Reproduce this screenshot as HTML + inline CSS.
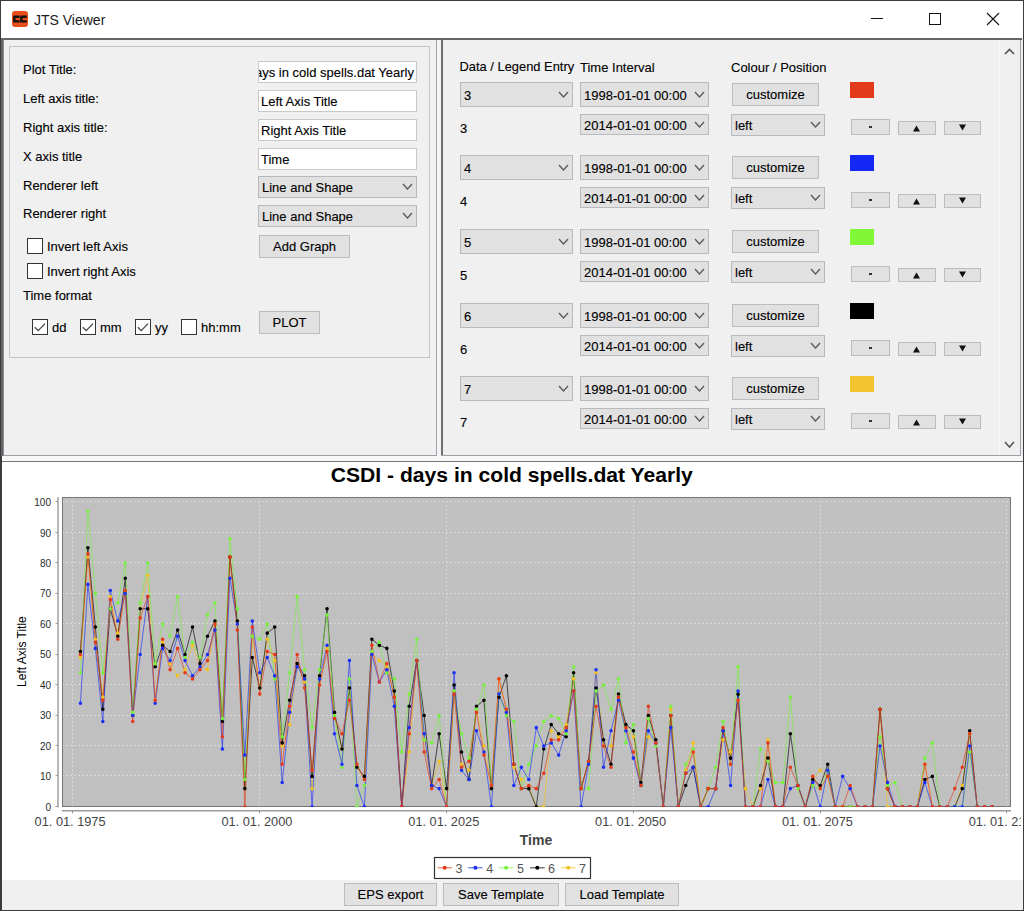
<!DOCTYPE html><html><head><meta charset="utf-8"><style>
html,body{margin:0;padding:0;}
body{width:1024px;height:911px;position:relative;overflow:hidden;background:#f0f0f0;font-family:"Liberation Sans", sans-serif;}
.t{position:absolute;white-space:nowrap;-webkit-text-stroke:0.12px currentColor;}
.b{position:absolute;box-sizing:border-box;}
</style></head><body>
<div class="b" style="left:0px;top:0px;width:1024px;height:38px;background:#fff;"></div>
<div class="b" style="left:0px;top:38px;width:1022px;height:2px;background:#666;"></div>
<div class="b" style="left:12px;top:11px;width:16px;height:16px;border-radius:3px;background:#e84e1b"></div>
<svg class="b" style="left:12px;top:11px" width="16" height="16"><path d="M7.6,5.8 H2.3 V10.4 H7.6 M14.8,5.8 H9.3 V10.4 H14.8" fill="none" stroke="#111" stroke-width="2.4" stroke-linejoin="round"/></svg>
<div class="t" style="left:34px;top:13px;font-size:14px;line-height:14px;color:#1a1a1a;font-weight:normal;-webkit-text-stroke:0;">JTS Viewer</div>
<div class="b" style="left:871px;top:18px;width:12px;height:1px;background:#111;"></div>
<div class="b" style="left:929px;top:13px;width:12px;height:12px;border:1px solid #111"></div>
<svg class="b" style="left:986px;top:12px" width="14" height="14"><path d="M1,1 L13,13 M13,1 L1,13" stroke="#111" stroke-width="1.1"/></svg>
<div class="b" style="left:3px;top:40px;width:434px;height:416px;background:#f0f0f0;"></div>
<div class="b" style="left:3px;top:40px;width:1px;height:416px;background:#8a8e96;"></div>
<div class="b" style="left:436px;top:40px;width:1px;height:416px;background:#a0a4ac;"></div>
<div class="b" style="left:3px;top:455px;width:434px;height:1px;background:#9ca0a8;"></div>
<div class="b" style="left:437px;top:40px;width:4px;height:416px;background:#f4f4f4;"></div>
<div class="b" style="left:9px;top:46px;width:421px;height:312px;box-shadow:inset 0 0 0 1px #c4c4c4;"></div>
<div class="t" style="left:23px;top:63px;font-size:13px;line-height:13px;color:#000;font-weight:normal;">Plot Title:</div>
<div class="t" style="left:23px;top:92px;font-size:13px;line-height:13px;color:#000;font-weight:normal;">Left axis title:</div>
<div class="t" style="left:23px;top:121px;font-size:13px;line-height:13px;color:#000;font-weight:normal;">Right axis title:</div>
<div class="t" style="left:23px;top:150px;font-size:13px;line-height:13px;color:#000;font-weight:normal;">X axis title</div>
<div class="t" style="left:23px;top:179px;font-size:13px;line-height:13px;color:#000;font-weight:normal;">Renderer left</div>
<div class="t" style="left:23px;top:207px;font-size:13px;line-height:13px;color:#000;font-weight:normal;">Renderer right</div>
<div class="b" style="left:258px;top:61px;width:159px;height:22px;background:#fff;box-shadow:inset 0 0 0 1px #c8c8c8;"></div>
<div class="b" style="left:259px;top:62px;width:157px;height:20px;overflow:hidden">
<div class="t" style="right:0;left:auto;top:4px;font-size:13px;line-height:13px;padding-right:2px">ays in cold spells.dat Yearly</div>
</div>
<div class="b" style="left:258px;top:90px;width:159px;height:22px;background:#fff;box-shadow:inset 0 0 0 1px #c8c8c8;"></div>
<div class="b" style="left:259px;top:91px;width:157px;height:20px;overflow:hidden">
<div class="t" style="right:auto;left:2px;top:4px;font-size:13px;line-height:13px;padding-right:2px">Left Axis Title</div>
</div>
<div class="b" style="left:258px;top:119px;width:159px;height:22px;background:#fff;box-shadow:inset 0 0 0 1px #c8c8c8;"></div>
<div class="b" style="left:259px;top:120px;width:157px;height:20px;overflow:hidden">
<div class="t" style="right:auto;left:2px;top:4px;font-size:13px;line-height:13px;padding-right:2px">Right Axis Title</div>
</div>
<div class="b" style="left:258px;top:148px;width:159px;height:22px;background:#fff;box-shadow:inset 0 0 0 1px #c8c8c8;"></div>
<div class="b" style="left:259px;top:149px;width:157px;height:20px;overflow:hidden">
<div class="t" style="right:auto;left:2px;top:4px;font-size:13px;line-height:13px;padding-right:2px">Time</div>
</div>
<div class="b" style="left:258px;top:176px;width:159px;height:22px;background:#e1e1e1;box-shadow:inset 0 0 0 1px #b8b9bc;"></div>
<div class="t" style="left:262px;top:181px;font-size:13px;line-height:13px;color:#000;font-weight:normal;">Line and Shape</div>
<svg class="b" style="left:402.0px;top:183.4px" width="11" height="7"><polyline points="1,1 5.5,6 10,1" fill="none" stroke="#5a5a5a" stroke-width="1.35"/></svg>
<div class="b" style="left:258px;top:205px;width:159px;height:22px;background:#e1e1e1;box-shadow:inset 0 0 0 1px #b8b9bc;"></div>
<div class="t" style="left:262px;top:210px;font-size:13px;line-height:13px;color:#000;font-weight:normal;">Line and Shape</div>
<svg class="b" style="left:402.0px;top:212.4px" width="11" height="7"><polyline points="1,1 5.5,6 10,1" fill="none" stroke="#5a5a5a" stroke-width="1.35"/></svg>
<div class="b" style="left:259px;top:235px;width:91px;height:23px;background:#e1e1e1;box-shadow:inset 0 0 0 1px #bcbcbc;"></div>
<div class="t" style="left:259px;width:91px;text-align:center;top:240px;font-size:13px;line-height:13px">Add Graph</div>
<div class="b" style="left:27px;top:238px;width:16px;height:16px;background:#fff;box-shadow:inset 0 0 0 1px #333;"></div>
<div class="t" style="left:47px;top:240px;font-size:13px;line-height:13px;color:#000;font-weight:normal;">Invert left Axis</div>
<div class="b" style="left:27px;top:263px;width:16px;height:16px;background:#fff;box-shadow:inset 0 0 0 1px #333;"></div>
<div class="t" style="left:47px;top:265px;font-size:13px;line-height:13px;color:#000;font-weight:normal;">Invert right Axis</div>
<div class="t" style="left:23px;top:289px;font-size:13px;line-height:13px;color:#000;font-weight:normal;">Time format</div>
<div class="b" style="left:32px;top:319px;width:16px;height:16px;background:#fff;box-shadow:inset 0 0 0 1px #333;"></div>
<svg class="b" style="left:32px;top:319px" width="16" height="16"><polyline points="2.8,8.2 6.2,11.6 13,4.6" fill="none" stroke="#444" stroke-width="1.3"/></svg>
<div class="t" style="left:52px;top:321px;font-size:13px;line-height:13px;color:#000;font-weight:normal;">dd</div>
<div class="b" style="left:80px;top:319px;width:16px;height:16px;background:#fff;box-shadow:inset 0 0 0 1px #333;"></div>
<svg class="b" style="left:80px;top:319px" width="16" height="16"><polyline points="2.8,8.2 6.2,11.6 13,4.6" fill="none" stroke="#444" stroke-width="1.3"/></svg>
<div class="t" style="left:100px;top:321px;font-size:13px;line-height:13px;color:#000;font-weight:normal;">mm</div>
<div class="b" style="left:135px;top:319px;width:16px;height:16px;background:#fff;box-shadow:inset 0 0 0 1px #333;"></div>
<svg class="b" style="left:135px;top:319px" width="16" height="16"><polyline points="2.8,8.2 6.2,11.6 13,4.6" fill="none" stroke="#444" stroke-width="1.3"/></svg>
<div class="t" style="left:155px;top:321px;font-size:13px;line-height:13px;color:#000;font-weight:normal;">yy</div>
<div class="b" style="left:181px;top:319px;width:16px;height:16px;background:#fff;box-shadow:inset 0 0 0 1px #333;"></div>
<div class="t" style="left:201px;top:321px;font-size:13px;line-height:13px;color:#000;font-weight:normal;">hh:mm</div>
<div class="b" style="left:259px;top:311px;width:61px;height:23px;background:#e1e1e1;box-shadow:inset 0 0 0 1px #bcbcbc;"></div>
<div class="t" style="left:259px;width:61px;text-align:center;top:316px;font-size:13px;line-height:13px">PLOT</div>
<div class="b" style="left:441px;top:40px;width:2px;height:416px;background:#707070;"></div>
<div class="b" style="left:1020px;top:40px;width:1px;height:416px;background:#9ca0a8;"></div>
<div class="b" style="left:441px;top:455px;width:580px;height:1px;background:#9ca0a8;"></div>
<div class="b" style="left:999px;top:41px;width:1px;height:414px;background:#fafafa;"></div>
<svg class="b" style="left:1004.0px;top:441.0px" width="11" height="7"><polyline points="1,1 5.5,6 10,1" fill="none" stroke="#555" stroke-width="1.6"/></svg>
<svg class="b" style="left:1004px;top:47px" width="12" height="9"><polyline points="1,7 5.5,2.5 10,7" fill="none" stroke="#555" stroke-width="1.7"/></svg>
<div class="t" style="left:459.5px;top:61px;font-size:12.9px;line-height:12.9px;color:#000;font-weight:normal;">Data / Legend Entry</div>
<div class="t" style="left:580px;top:61px;font-size:13px;line-height:13px;color:#000;font-weight:normal;">Time Interval</div>
<div class="t" style="left:731px;top:61px;font-size:13px;line-height:13px;color:#000;font-weight:normal;">Colour / Position</div>
<div class="b" style="left:460px;top:82px;width:113px;height:25px;background:#e1e1e1;box-shadow:inset 0 0 0 1px #b8b9bc;"></div>
<div class="t" style="left:464px;top:89px;font-size:13px;line-height:13px;color:#000;font-weight:normal;">3</div>
<svg class="b" style="left:558.0px;top:90.9px" width="11" height="7"><polyline points="1,1 5.5,6 10,1" fill="none" stroke="#5a5a5a" stroke-width="1.35"/></svg>
<div class="t" style="left:460px;top:122px;font-size:13px;line-height:13px;color:#000;font-weight:normal;">3</div>
<div class="b" style="left:580px;top:82px;width:129px;height:25px;background:#e1e1e1;box-shadow:inset 0 0 0 1px #b8b9bc;"></div>
<div class="t" style="left:584px;top:89px;font-size:13px;line-height:13px;color:#000;font-weight:normal;">1998-01-01 00:00</div>
<svg class="b" style="left:694.0px;top:90.9px" width="11" height="7"><polyline points="1,1 5.5,6 10,1" fill="none" stroke="#5a5a5a" stroke-width="1.35"/></svg>
<div class="b" style="left:580px;top:114px;width:129px;height:21px;background:#e1e1e1;box-shadow:inset 0 0 0 1px #b8b9bc;"></div>
<div class="t" style="left:584px;top:119px;font-size:13px;line-height:13px;color:#000;font-weight:normal;">2014-01-01 00:00</div>
<svg class="b" style="left:694.0px;top:120.9px" width="11" height="7"><polyline points="1,1 5.5,6 10,1" fill="none" stroke="#5a5a5a" stroke-width="1.35"/></svg>
<div class="b" style="left:732px;top:83px;width:87px;height:23px;background:#e1e1e1;box-shadow:inset 0 0 0 1px #bcbcbc;"></div>
<div class="t" style="left:732px;width:87px;text-align:center;top:88px;font-size:13px;line-height:13px">customize</div>
<div class="b" style="left:731px;top:114px;width:94px;height:22px;background:#e1e1e1;box-shadow:inset 0 0 0 1px #b8b9bc;"></div>
<div class="t" style="left:735px;top:119px;font-size:13px;line-height:13px;color:#000;font-weight:normal;">left</div>
<svg class="b" style="left:810.0px;top:121.4px" width="11" height="7"><polyline points="1,1 5.5,6 10,1" fill="none" stroke="#5a5a5a" stroke-width="1.35"/></svg>
<div class="b" style="left:850px;top:82px;width:24px;height:16px;background:#e23a1a;"></div>
<div class="b" style="left:851px;top:119px;width:39px;height:16px;background:#e1e1e1;box-shadow:inset 0 0 0 1px #bcbcbc;"></div>
<div class="t" style="left:851px;width:39px;text-align:center;top:122px;font-size:11px;line-height:11px"></div>
<div class="b" style="left:869px;top:126px;width:3px;height:2px;background:#333;"></div>
<div class="b" style="left:898px;top:121px;width:38px;height:14px;background:#e1e1e1;box-shadow:inset 0 0 0 1px #bcbcbc;"></div>
<div class="t" style="left:898px;width:38px;text-align:center;top:125px;font-size:9px;line-height:9px"></div>
<svg class="b" style="left:912px;top:124px" width="9" height="8"><polygon points="1,7.5 4.5,1.5 8,7.5" fill="#111"/></svg>
<div class="b" style="left:944px;top:121px;width:37px;height:14px;background:#e1e1e1;box-shadow:inset 0 0 0 1px #bcbcbc;"></div>
<div class="t" style="left:944px;width:37px;text-align:center;top:125px;font-size:9px;line-height:9px"></div>
<svg class="b" style="left:958px;top:124px" width="9" height="8"><polygon points="1,0.5 4.5,6.5 8,0.5" fill="#111"/></svg>
<div class="b" style="left:460px;top:155px;width:113px;height:25px;background:#e1e1e1;box-shadow:inset 0 0 0 1px #b8b9bc;"></div>
<div class="t" style="left:464px;top:162px;font-size:13px;line-height:13px;color:#000;font-weight:normal;">4</div>
<svg class="b" style="left:558.0px;top:163.9px" width="11" height="7"><polyline points="1,1 5.5,6 10,1" fill="none" stroke="#5a5a5a" stroke-width="1.35"/></svg>
<div class="t" style="left:460px;top:195px;font-size:13px;line-height:13px;color:#000;font-weight:normal;">4</div>
<div class="b" style="left:580px;top:155px;width:129px;height:25px;background:#e1e1e1;box-shadow:inset 0 0 0 1px #b8b9bc;"></div>
<div class="t" style="left:584px;top:162px;font-size:13px;line-height:13px;color:#000;font-weight:normal;">1998-01-01 00:00</div>
<svg class="b" style="left:694.0px;top:163.9px" width="11" height="7"><polyline points="1,1 5.5,6 10,1" fill="none" stroke="#5a5a5a" stroke-width="1.35"/></svg>
<div class="b" style="left:580px;top:187px;width:129px;height:21px;background:#e1e1e1;box-shadow:inset 0 0 0 1px #b8b9bc;"></div>
<div class="t" style="left:584px;top:192px;font-size:13px;line-height:13px;color:#000;font-weight:normal;">2014-01-01 00:00</div>
<svg class="b" style="left:694.0px;top:193.9px" width="11" height="7"><polyline points="1,1 5.5,6 10,1" fill="none" stroke="#5a5a5a" stroke-width="1.35"/></svg>
<div class="b" style="left:732px;top:156px;width:87px;height:23px;background:#e1e1e1;box-shadow:inset 0 0 0 1px #bcbcbc;"></div>
<div class="t" style="left:732px;width:87px;text-align:center;top:161px;font-size:13px;line-height:13px">customize</div>
<div class="b" style="left:731px;top:187px;width:94px;height:22px;background:#e1e1e1;box-shadow:inset 0 0 0 1px #b8b9bc;"></div>
<div class="t" style="left:735px;top:192px;font-size:13px;line-height:13px;color:#000;font-weight:normal;">left</div>
<svg class="b" style="left:810.0px;top:194.4px" width="11" height="7"><polyline points="1,1 5.5,6 10,1" fill="none" stroke="#5a5a5a" stroke-width="1.35"/></svg>
<div class="b" style="left:850px;top:155px;width:24px;height:16px;background:#1428f5;"></div>
<div class="b" style="left:851px;top:192px;width:39px;height:16px;background:#e1e1e1;box-shadow:inset 0 0 0 1px #bcbcbc;"></div>
<div class="t" style="left:851px;width:39px;text-align:center;top:195px;font-size:11px;line-height:11px"></div>
<div class="b" style="left:869px;top:199px;width:3px;height:2px;background:#333;"></div>
<div class="b" style="left:898px;top:194px;width:38px;height:14px;background:#e1e1e1;box-shadow:inset 0 0 0 1px #bcbcbc;"></div>
<div class="t" style="left:898px;width:38px;text-align:center;top:198px;font-size:9px;line-height:9px"></div>
<svg class="b" style="left:912px;top:197px" width="9" height="8"><polygon points="1,7.5 4.5,1.5 8,7.5" fill="#111"/></svg>
<div class="b" style="left:944px;top:194px;width:37px;height:14px;background:#e1e1e1;box-shadow:inset 0 0 0 1px #bcbcbc;"></div>
<div class="t" style="left:944px;width:37px;text-align:center;top:198px;font-size:9px;line-height:9px"></div>
<svg class="b" style="left:958px;top:197px" width="9" height="8"><polygon points="1,0.5 4.5,6.5 8,0.5" fill="#111"/></svg>
<div class="b" style="left:460px;top:229px;width:113px;height:25px;background:#e1e1e1;box-shadow:inset 0 0 0 1px #b8b9bc;"></div>
<div class="t" style="left:464px;top:236px;font-size:13px;line-height:13px;color:#000;font-weight:normal;">5</div>
<svg class="b" style="left:558.0px;top:237.9px" width="11" height="7"><polyline points="1,1 5.5,6 10,1" fill="none" stroke="#5a5a5a" stroke-width="1.35"/></svg>
<div class="t" style="left:460px;top:269px;font-size:13px;line-height:13px;color:#000;font-weight:normal;">5</div>
<div class="b" style="left:580px;top:229px;width:129px;height:25px;background:#e1e1e1;box-shadow:inset 0 0 0 1px #b8b9bc;"></div>
<div class="t" style="left:584px;top:236px;font-size:13px;line-height:13px;color:#000;font-weight:normal;">1998-01-01 00:00</div>
<svg class="b" style="left:694.0px;top:237.9px" width="11" height="7"><polyline points="1,1 5.5,6 10,1" fill="none" stroke="#5a5a5a" stroke-width="1.35"/></svg>
<div class="b" style="left:580px;top:261px;width:129px;height:21px;background:#e1e1e1;box-shadow:inset 0 0 0 1px #b8b9bc;"></div>
<div class="t" style="left:584px;top:266px;font-size:13px;line-height:13px;color:#000;font-weight:normal;">2014-01-01 00:00</div>
<svg class="b" style="left:694.0px;top:267.9px" width="11" height="7"><polyline points="1,1 5.5,6 10,1" fill="none" stroke="#5a5a5a" stroke-width="1.35"/></svg>
<div class="b" style="left:732px;top:230px;width:87px;height:23px;background:#e1e1e1;box-shadow:inset 0 0 0 1px #bcbcbc;"></div>
<div class="t" style="left:732px;width:87px;text-align:center;top:235px;font-size:13px;line-height:13px">customize</div>
<div class="b" style="left:731px;top:261px;width:94px;height:22px;background:#e1e1e1;box-shadow:inset 0 0 0 1px #b8b9bc;"></div>
<div class="t" style="left:735px;top:266px;font-size:13px;line-height:13px;color:#000;font-weight:normal;">left</div>
<svg class="b" style="left:810.0px;top:268.4px" width="11" height="7"><polyline points="1,1 5.5,6 10,1" fill="none" stroke="#5a5a5a" stroke-width="1.35"/></svg>
<div class="b" style="left:850px;top:229px;width:24px;height:16px;background:#80f838;"></div>
<div class="b" style="left:851px;top:266px;width:39px;height:16px;background:#e1e1e1;box-shadow:inset 0 0 0 1px #bcbcbc;"></div>
<div class="t" style="left:851px;width:39px;text-align:center;top:269px;font-size:11px;line-height:11px"></div>
<div class="b" style="left:869px;top:273px;width:3px;height:2px;background:#333;"></div>
<div class="b" style="left:898px;top:268px;width:38px;height:14px;background:#e1e1e1;box-shadow:inset 0 0 0 1px #bcbcbc;"></div>
<div class="t" style="left:898px;width:38px;text-align:center;top:272px;font-size:9px;line-height:9px"></div>
<svg class="b" style="left:912px;top:271px" width="9" height="8"><polygon points="1,7.5 4.5,1.5 8,7.5" fill="#111"/></svg>
<div class="b" style="left:944px;top:268px;width:37px;height:14px;background:#e1e1e1;box-shadow:inset 0 0 0 1px #bcbcbc;"></div>
<div class="t" style="left:944px;width:37px;text-align:center;top:272px;font-size:9px;line-height:9px"></div>
<svg class="b" style="left:958px;top:271px" width="9" height="8"><polygon points="1,0.5 4.5,6.5 8,0.5" fill="#111"/></svg>
<div class="b" style="left:460px;top:303px;width:113px;height:25px;background:#e1e1e1;box-shadow:inset 0 0 0 1px #b8b9bc;"></div>
<div class="t" style="left:464px;top:310px;font-size:13px;line-height:13px;color:#000;font-weight:normal;">6</div>
<svg class="b" style="left:558.0px;top:311.9px" width="11" height="7"><polyline points="1,1 5.5,6 10,1" fill="none" stroke="#5a5a5a" stroke-width="1.35"/></svg>
<div class="t" style="left:460px;top:343px;font-size:13px;line-height:13px;color:#000;font-weight:normal;">6</div>
<div class="b" style="left:580px;top:303px;width:129px;height:25px;background:#e1e1e1;box-shadow:inset 0 0 0 1px #b8b9bc;"></div>
<div class="t" style="left:584px;top:310px;font-size:13px;line-height:13px;color:#000;font-weight:normal;">1998-01-01 00:00</div>
<svg class="b" style="left:694.0px;top:311.9px" width="11" height="7"><polyline points="1,1 5.5,6 10,1" fill="none" stroke="#5a5a5a" stroke-width="1.35"/></svg>
<div class="b" style="left:580px;top:335px;width:129px;height:21px;background:#e1e1e1;box-shadow:inset 0 0 0 1px #b8b9bc;"></div>
<div class="t" style="left:584px;top:340px;font-size:13px;line-height:13px;color:#000;font-weight:normal;">2014-01-01 00:00</div>
<svg class="b" style="left:694.0px;top:341.9px" width="11" height="7"><polyline points="1,1 5.5,6 10,1" fill="none" stroke="#5a5a5a" stroke-width="1.35"/></svg>
<div class="b" style="left:732px;top:304px;width:87px;height:23px;background:#e1e1e1;box-shadow:inset 0 0 0 1px #bcbcbc;"></div>
<div class="t" style="left:732px;width:87px;text-align:center;top:309px;font-size:13px;line-height:13px">customize</div>
<div class="b" style="left:731px;top:335px;width:94px;height:22px;background:#e1e1e1;box-shadow:inset 0 0 0 1px #b8b9bc;"></div>
<div class="t" style="left:735px;top:340px;font-size:13px;line-height:13px;color:#000;font-weight:normal;">left</div>
<svg class="b" style="left:810.0px;top:342.4px" width="11" height="7"><polyline points="1,1 5.5,6 10,1" fill="none" stroke="#5a5a5a" stroke-width="1.35"/></svg>
<div class="b" style="left:850px;top:303px;width:24px;height:16px;background:#000000;"></div>
<div class="b" style="left:851px;top:340px;width:39px;height:16px;background:#e1e1e1;box-shadow:inset 0 0 0 1px #bcbcbc;"></div>
<div class="t" style="left:851px;width:39px;text-align:center;top:343px;font-size:11px;line-height:11px"></div>
<div class="b" style="left:869px;top:347px;width:3px;height:2px;background:#333;"></div>
<div class="b" style="left:898px;top:342px;width:38px;height:14px;background:#e1e1e1;box-shadow:inset 0 0 0 1px #bcbcbc;"></div>
<div class="t" style="left:898px;width:38px;text-align:center;top:346px;font-size:9px;line-height:9px"></div>
<svg class="b" style="left:912px;top:345px" width="9" height="8"><polygon points="1,7.5 4.5,1.5 8,7.5" fill="#111"/></svg>
<div class="b" style="left:944px;top:342px;width:37px;height:14px;background:#e1e1e1;box-shadow:inset 0 0 0 1px #bcbcbc;"></div>
<div class="t" style="left:944px;width:37px;text-align:center;top:346px;font-size:9px;line-height:9px"></div>
<svg class="b" style="left:958px;top:345px" width="9" height="8"><polygon points="1,0.5 4.5,6.5 8,0.5" fill="#111"/></svg>
<div class="b" style="left:460px;top:376px;width:113px;height:25px;background:#e1e1e1;box-shadow:inset 0 0 0 1px #b8b9bc;"></div>
<div class="t" style="left:464px;top:383px;font-size:13px;line-height:13px;color:#000;font-weight:normal;">7</div>
<svg class="b" style="left:558.0px;top:384.9px" width="11" height="7"><polyline points="1,1 5.5,6 10,1" fill="none" stroke="#5a5a5a" stroke-width="1.35"/></svg>
<div class="t" style="left:460px;top:416px;font-size:13px;line-height:13px;color:#000;font-weight:normal;">7</div>
<div class="b" style="left:580px;top:376px;width:129px;height:25px;background:#e1e1e1;box-shadow:inset 0 0 0 1px #b8b9bc;"></div>
<div class="t" style="left:584px;top:383px;font-size:13px;line-height:13px;color:#000;font-weight:normal;">1998-01-01 00:00</div>
<svg class="b" style="left:694.0px;top:384.9px" width="11" height="7"><polyline points="1,1 5.5,6 10,1" fill="none" stroke="#5a5a5a" stroke-width="1.35"/></svg>
<div class="b" style="left:580px;top:408px;width:129px;height:21px;background:#e1e1e1;box-shadow:inset 0 0 0 1px #b8b9bc;"></div>
<div class="t" style="left:584px;top:413px;font-size:13px;line-height:13px;color:#000;font-weight:normal;">2014-01-01 00:00</div>
<svg class="b" style="left:694.0px;top:414.9px" width="11" height="7"><polyline points="1,1 5.5,6 10,1" fill="none" stroke="#5a5a5a" stroke-width="1.35"/></svg>
<div class="b" style="left:732px;top:377px;width:87px;height:23px;background:#e1e1e1;box-shadow:inset 0 0 0 1px #bcbcbc;"></div>
<div class="t" style="left:732px;width:87px;text-align:center;top:382px;font-size:13px;line-height:13px">customize</div>
<div class="b" style="left:731px;top:408px;width:94px;height:22px;background:#e1e1e1;box-shadow:inset 0 0 0 1px #b8b9bc;"></div>
<div class="t" style="left:735px;top:413px;font-size:13px;line-height:13px;color:#000;font-weight:normal;">left</div>
<svg class="b" style="left:810.0px;top:415.4px" width="11" height="7"><polyline points="1,1 5.5,6 10,1" fill="none" stroke="#5a5a5a" stroke-width="1.35"/></svg>
<div class="b" style="left:850px;top:376px;width:24px;height:16px;background:#f4c430;"></div>
<div class="b" style="left:851px;top:413px;width:39px;height:16px;background:#e1e1e1;box-shadow:inset 0 0 0 1px #bcbcbc;"></div>
<div class="t" style="left:851px;width:39px;text-align:center;top:416px;font-size:11px;line-height:11px"></div>
<div class="b" style="left:869px;top:420px;width:3px;height:2px;background:#333;"></div>
<div class="b" style="left:898px;top:415px;width:38px;height:14px;background:#e1e1e1;box-shadow:inset 0 0 0 1px #bcbcbc;"></div>
<div class="t" style="left:898px;width:38px;text-align:center;top:419px;font-size:9px;line-height:9px"></div>
<svg class="b" style="left:912px;top:418px" width="9" height="8"><polygon points="1,7.5 4.5,1.5 8,7.5" fill="#111"/></svg>
<div class="b" style="left:944px;top:415px;width:37px;height:14px;background:#e1e1e1;box-shadow:inset 0 0 0 1px #bcbcbc;"></div>
<div class="t" style="left:944px;width:37px;text-align:center;top:419px;font-size:9px;line-height:9px"></div>
<svg class="b" style="left:958px;top:418px" width="9" height="8"><polygon points="1,0.5 4.5,6.5 8,0.5" fill="#111"/></svg>
<div class="b" style="left:0px;top:456px;width:1024px;height:5px;background:#f8f8f8;"></div>
<div class="b" style="left:0px;top:461px;width:1024px;height:1px;background:#777;"></div>
<div class="b" style="left:2px;top:462px;width:1021px;height:418px;background:#fff;"></div>
<div class="b" style="left:2px;top:880px;width:1021px;height:30px;background:#f0f0f0;"></div>
<div class="b" style="left:344px;top:883px;width:93px;height:23px;background:#e1e1e1;box-shadow:inset 0 0 0 1px #bcbcbc;"></div>
<div class="t" style="left:344px;width:93px;text-align:center;top:888px;font-size:13px;line-height:13px">EPS export</div>
<div class="b" style="left:443px;top:883px;width:116px;height:23px;background:#e1e1e1;box-shadow:inset 0 0 0 1px #bcbcbc;"></div>
<div class="t" style="left:443px;width:116px;text-align:center;top:888px;font-size:13px;line-height:13px">Save Template</div>
<div class="b" style="left:565px;top:883px;width:114px;height:23px;background:#e1e1e1;box-shadow:inset 0 0 0 1px #bcbcbc;"></div>
<div class="t" style="left:565px;width:114px;text-align:center;top:888px;font-size:13px;line-height:13px">Load Template</div>
<svg class="b" style="left:2px;top:462px" width="1019" height="418" viewBox="2 462 1019 418" font-family="Liberation Sans, sans-serif">
<text x="511.8" y="482.3" text-anchor="middle" font-weight="bold" font-size="20" textLength="362" lengthAdjust="spacingAndGlyphs" fill="#000">CSDI - days in cold spells.dat Yearly</text>
<rect x="62" y="497" width="948" height="309" fill="#c0c0c0"/>
<path d="M62,775.5H1010M62,745.5H1010M62,715.5H1010M62,684.5H1010M62,654.5H1010M62,623.5H1010M62,593.5H1010M62,562.5H1010M62,532.5H1010M62,501.5H1010M72.5,497V806M259.5,497V806M446.5,497V806M633.5,497V806M820.5,497V806M1006.5,497V806" stroke="#d9d9d9" stroke-width="1" stroke-dasharray="2,2" fill="none"/>
<rect x="62.5" y="497.5" width="948" height="309" fill="none" stroke="#777" stroke-width="1"/>
<path d="M58,497V807.5M62,810.8H1011" stroke="#9a9a9a" stroke-width="1.4" fill="none"/>
<path d="M55.5,806.5H58M55.5,775.5H58M55.5,745.5H58M55.5,715.5H58M55.5,684.5H58M55.5,654.5H58M55.5,623.5H58M55.5,593.5H58M55.5,562.5H58M55.5,532.5H58M55.5,501.5H58M72.5,811V813.5M259.5,811V813.5M446.5,811V813.5M633.5,811V813.5M820.5,811V813.5M1006.5,811V813.5" stroke="#9a9a9a" stroke-width="1" fill="none"/>
<text x="51" y="810.8" text-anchor="end" font-size="10" fill="#2a2a2a">0</text>
<text x="51" y="780.3" text-anchor="end" font-size="10" fill="#2a2a2a">10</text>
<text x="51" y="749.8" text-anchor="end" font-size="10" fill="#2a2a2a">20</text>
<text x="51" y="719.4" text-anchor="end" font-size="10" fill="#2a2a2a">30</text>
<text x="51" y="688.9" text-anchor="end" font-size="10" fill="#2a2a2a">40</text>
<text x="51" y="658.4" text-anchor="end" font-size="10" fill="#2a2a2a">50</text>
<text x="51" y="627.9" text-anchor="end" font-size="10" fill="#2a2a2a">60</text>
<text x="51" y="597.4" text-anchor="end" font-size="10" fill="#2a2a2a">70</text>
<text x="51" y="567.0" text-anchor="end" font-size="10" fill="#2a2a2a">80</text>
<text x="51" y="536.5" text-anchor="end" font-size="10" fill="#2a2a2a">90</text>
<text x="51" y="506.0" text-anchor="end" font-size="10" fill="#2a2a2a">100</text>
<text x="70.1" y="826.3" text-anchor="middle" font-size="12.8" textLength="71" lengthAdjust="spacing" fill="#444">01. 01. 1975</text>
<text x="256.9" y="826.3" text-anchor="middle" font-size="12.8" textLength="71" lengthAdjust="spacing" fill="#444">01. 01. 2000</text>
<text x="443.8" y="826.3" text-anchor="middle" font-size="12.8" textLength="71" lengthAdjust="spacing" fill="#444">01. 01. 2025</text>
<text x="630.6" y="826.3" text-anchor="middle" font-size="12.8" textLength="71" lengthAdjust="spacing" fill="#444">01. 01. 2050</text>
<text x="817.4" y="826.3" text-anchor="middle" font-size="12.8" textLength="71" lengthAdjust="spacing" fill="#444">01. 01. 2075</text>
<text x="1004.2" y="826.3" text-anchor="middle" font-size="12.8" textLength="71" lengthAdjust="spacing" fill="#444">01. 01. 2100</text>
<text x="0" y="0" transform="translate(26,651.6) rotate(-90)" text-anchor="middle" font-size="12" fill="#000">Left Axis Title</text>
<text x="536" y="845.3" text-anchor="middle" font-weight="bold" font-size="14" fill="#444">Time</text>
<svg x="62" y="497" width="948" height="310" viewBox="62 497 948 310" overflow="hidden">
<polyline points="80.42,657.55 87.90,556.96 95.37,639.26 102.84,697.17 110.31,596.59 117.79,633.16 125.26,590.49 132.73,715.46 140.21,608.78 147.68,575.25 155.15,700.22 162.63,642.31 170.10,663.64 177.57,675.84 185.04,669.74 192.52,645.36 199.99,666.69 207.46,669.74 214.94,624.02 222.41,721.56 229.88,556.96 237.36,624.02 244.83,788.61 252.30,636.21 259.77,688.03 267.25,639.26 274.72,660.60 282.19,745.94 289.67,724.60 297.14,663.64 304.61,681.93 312.09,788.61 319.56,684.98 327.03,648.40 334.50,715.46 341.98,748.99 349.45,688.03 356.92,767.28 364.40,779.47 371.87,654.50 379.34,660.60 386.82,666.69 394.29,697.17 401.76,806.90 409.23,752.04 416.71,660.60 424.18,739.84 431.65,785.56 439.13,761.18 446.60,806.90 454.07,691.08 461.55,764.23 469.02,770.32 476.49,709.36 483.96,745.94 491.44,788.61 498.91,678.88 506.38,709.36 513.86,767.28 521.33,779.47 528.80,785.56 536.28,806.90 543.75,806.90 551.22,730.70 558.69,736.80 566.17,724.60 573.64,678.88 581.11,788.61 588.59,761.18 596.06,672.79 603.53,745.94 611.01,745.94 618.48,697.17 625.95,727.65 633.42,736.80 640.90,785.56 648.37,736.80 655.84,742.89 663.32,806.90 670.79,709.36 678.26,806.90 685.74,770.32 693.21,742.89 700.68,806.90 708.15,788.61 715.63,788.61 723.10,739.84 730.57,752.04 738.05,700.22 745.52,788.61 752.99,806.90 760.47,788.61 767.94,739.84 775.41,806.90 782.88,806.90 790.36,788.61 797.83,785.56 805.30,806.90 812.78,779.47 820.25,770.32 827.72,776.42 835.20,806.90 842.67,806.90 850.14,806.90 857.61,806.90 865.09,806.90 872.56,806.90 880.03,709.36 887.51,806.90 894.98,806.90 902.45,806.90 909.93,806.90 917.40,806.90 924.87,764.23 932.34,806.90 939.82,806.90 947.29,806.90 954.76,806.90 962.24,785.56 969.71,733.75 977.18,806.90 984.66,806.90 992.13,806.90" fill="none" stroke="#f4c020" stroke-width="0.9" stroke-opacity="0.72" stroke-linejoin="round"/>
<polyline points="80.42,651.45 87.90,547.82 95.37,627.07 102.84,709.36 110.31,608.78 117.79,636.21 125.26,578.30 132.73,715.46 140.21,608.78 147.68,608.78 155.15,666.69 162.63,645.36 170.10,651.45 177.57,630.12 185.04,654.50 192.52,627.07 199.99,663.64 207.46,636.21 214.94,620.97 222.41,721.56 229.88,556.96 237.36,620.97 244.83,788.61 252.30,657.55 259.77,688.03 267.25,633.16 274.72,627.07 282.19,742.89 289.67,700.22 297.14,663.64 304.61,675.84 312.09,776.42 319.56,675.84 327.03,608.78 334.50,712.41 341.98,748.99 349.45,688.03 356.92,767.28 364.40,776.42 371.87,639.26 379.34,645.36 386.82,648.40 394.29,691.08 401.76,806.90 409.23,706.32 416.71,660.60 424.18,715.46 431.65,785.56 439.13,733.75 446.60,788.61 454.07,684.98 461.55,752.04 469.02,779.47 476.49,706.32 483.96,700.22 491.44,788.61 498.91,697.17 506.38,675.84 513.86,764.23 521.33,788.61 528.80,788.61 536.28,806.90 543.75,748.99 551.22,724.60 558.69,733.75 566.17,736.80 573.64,672.79 581.11,788.61 588.59,761.18 596.06,688.03 603.53,739.84 611.01,764.23 618.48,694.12 625.95,724.60 633.42,730.70 640.90,782.52 648.37,715.46 655.84,739.84 663.32,806.90 670.79,715.46 678.26,806.90 685.74,785.56 693.21,767.28 700.68,806.90 708.15,788.61 715.63,788.61 723.10,730.70 730.57,758.13 738.05,694.12 745.52,806.90 752.99,806.90 760.47,785.56 767.94,758.13 775.41,806.90 782.88,806.90 790.36,733.75 797.83,785.56 805.30,806.90 812.78,779.47 820.25,785.56 827.72,764.23 835.20,806.90 842.67,806.90 850.14,806.90 857.61,806.90 865.09,806.90 872.56,806.90 880.03,709.36 887.51,788.61 894.98,806.90 902.45,806.90 909.93,806.90 917.40,806.90 924.87,779.47 932.34,776.42 939.82,806.90 947.29,806.90 954.76,806.90 962.24,788.61 969.71,730.70 977.18,806.90 984.66,806.90 992.13,806.90" fill="none" stroke="#000000" stroke-width="0.9" stroke-opacity="0.72" stroke-linejoin="round"/>
<polyline points="80.42,672.79 87.90,511.24 95.37,593.54 102.84,672.79 110.31,608.78 117.79,602.68 125.26,563.06 132.73,712.41 140.21,602.68 147.68,563.06 155.15,663.64 162.63,624.02 170.10,636.21 177.57,596.59 185.04,657.55 192.52,642.31 199.99,657.55 207.46,614.88 214.94,602.68 222.41,718.51 229.88,538.68 237.36,608.78 244.83,779.47 252.30,636.21 259.77,639.26 267.25,624.02 274.72,678.88 282.19,736.80 289.67,672.79 297.14,596.59 304.61,669.74 312.09,727.65 319.56,669.74 327.03,614.88 334.50,715.46 341.98,767.28 349.45,678.88 356.92,806.90 364.40,785.56 371.87,651.45 379.34,642.31 386.82,672.79 394.29,678.88 401.76,752.04 409.23,694.12 416.71,639.26 424.18,739.84 431.65,742.89 439.13,715.46 446.60,806.90 454.07,691.08 461.55,733.75 469.02,758.13 476.49,709.36 483.96,684.98 491.44,785.56 498.91,694.12 506.38,715.46 513.86,721.56 521.33,788.61 528.80,764.23 536.28,745.94 543.75,721.56 551.22,715.46 558.69,718.51 566.17,733.75 573.64,666.69 581.11,788.61 588.59,788.61 596.06,691.08 603.53,684.98 611.01,709.36 618.48,678.88 625.95,742.89 633.42,724.60 640.90,785.56 648.37,718.51 655.84,745.94 663.32,806.90 670.79,706.32 678.26,806.90 685.74,764.23 693.21,748.99 700.68,806.90 708.15,788.61 715.63,767.28 723.10,721.56 730.57,764.23 738.05,666.69 745.52,806.90 752.99,806.90 760.47,748.99 767.94,761.18 775.41,782.52 782.88,782.52 790.36,697.17 797.83,788.61 805.30,806.90 812.78,785.56 820.25,788.61 827.72,770.32 835.20,806.90 842.67,806.90 850.14,806.90 857.61,806.90 865.09,806.90 872.56,806.90 880.03,736.80 887.51,785.56 894.98,782.52 902.45,806.90 909.93,806.90 917.40,806.90 924.87,758.13 932.34,742.89 939.82,806.90 947.29,806.90 954.76,806.90 962.24,806.90 969.71,752.04 977.18,806.90 984.66,806.90 992.13,806.90" fill="none" stroke="#78f040" stroke-width="0.9" stroke-opacity="0.72" stroke-linejoin="round"/>
<polyline points="80.42,703.27 87.90,584.40 95.37,648.40 102.84,721.56 110.31,590.49 117.79,620.97 125.26,593.54 132.73,715.46 140.21,654.50 147.68,596.59 155.15,703.27 162.63,648.40 170.10,660.60 177.57,636.21 185.04,660.60 192.52,675.84 199.99,666.69 207.46,654.50 214.94,630.12 222.41,748.99 229.88,578.30 237.36,624.02 244.83,755.08 252.30,620.97 259.77,672.79 267.25,657.55 274.72,675.84 282.19,782.52 289.67,712.41 297.14,666.69 304.61,678.88 312.09,806.90 319.56,678.88 327.03,645.36 334.50,733.75 341.98,764.23 349.45,660.60 356.92,785.56 364.40,806.90 371.87,654.50 379.34,681.93 386.82,669.74 394.29,706.32 401.76,806.90 409.23,727.65 416.71,660.60 424.18,733.75 431.65,785.56 439.13,788.61 446.60,806.90 454.07,672.79 461.55,770.32 469.02,779.47 476.49,730.70 483.96,752.04 491.44,806.90 498.91,694.12 506.38,712.41 513.86,785.56 521.33,767.28 528.80,779.47 536.28,727.65 543.75,745.94 551.22,742.89 558.69,755.08 566.17,730.70 573.64,691.08 581.11,806.90 588.59,764.23 596.06,669.74 603.53,767.28 611.01,730.70 618.48,700.22 625.95,730.70 633.42,758.13 640.90,785.56 648.37,730.70 655.84,742.89 663.32,806.90 670.79,727.65 678.26,806.90 685.74,773.37 693.21,767.28 700.68,806.90 708.15,806.90 715.63,788.61 723.10,730.70 730.57,785.56 738.05,691.08 745.52,806.90 752.99,806.90 760.47,806.90 767.94,779.47 775.41,806.90 782.88,806.90 790.36,788.61 797.83,785.56 805.30,806.90 812.78,782.52 820.25,806.90 827.72,770.32 835.20,806.90 842.67,776.42 850.14,788.61 857.61,806.90 865.09,806.90 872.56,806.90 880.03,745.94 887.51,782.52 894.98,806.90 902.45,806.90 909.93,806.90 917.40,806.90 924.87,782.52 932.34,806.90 939.82,806.90 947.29,806.90 954.76,806.90 962.24,806.90 969.71,745.94 977.18,806.90 984.66,806.90 992.13,806.90" fill="none" stroke="#1a30f5" stroke-width="0.9" stroke-opacity="0.72" stroke-linejoin="round"/>
<polyline points="80.42,654.50 87.90,553.92 95.37,642.31 102.84,700.22 110.31,599.64 117.79,639.26 125.26,590.49 132.73,721.56 140.21,617.92 147.68,596.59 155.15,700.22 162.63,639.26 170.10,669.74 177.57,648.40 185.04,672.79 192.52,678.88 199.99,669.74 207.46,660.60 214.94,624.02 222.41,736.80 229.88,556.96 237.36,630.12 244.83,806.90 252.30,627.07 259.77,694.12 267.25,651.45 274.72,654.50 282.19,764.23 289.67,706.32 297.14,654.50 304.61,688.03 312.09,770.32 319.56,684.98 327.03,651.45 334.50,718.51 341.98,733.75 349.45,700.22 356.92,764.23 364.40,779.47 371.87,645.36 379.34,681.93 386.82,663.64 394.29,697.17 401.76,806.90 409.23,733.75 416.71,660.60 424.18,752.04 431.65,788.61 439.13,779.47 446.60,806.90 454.07,694.12 461.55,767.28 469.02,761.18 476.49,712.41 483.96,755.08 491.44,785.56 498.91,678.88 506.38,709.36 513.86,764.23 521.33,788.61 528.80,785.56 536.28,788.61 543.75,773.37 551.22,739.84 558.69,739.84 566.17,727.65 573.64,691.08 581.11,788.61 588.59,761.18 596.06,706.32 603.53,745.94 611.01,767.28 618.48,697.17 625.95,727.65 633.42,752.04 640.90,785.56 648.37,706.32 655.84,742.89 663.32,806.90 670.79,715.46 678.26,806.90 685.74,773.37 693.21,752.04 700.68,806.90 708.15,788.61 715.63,788.61 723.10,727.65 730.57,764.23 738.05,700.22 745.52,806.90 752.99,806.90 760.47,806.90 767.94,742.89 775.41,806.90 782.88,806.90 790.36,767.28 797.83,785.56 805.30,806.90 812.78,776.42 820.25,788.61 827.72,776.42 835.20,806.90 842.67,806.90 850.14,785.56 857.61,806.90 865.09,806.90 872.56,806.90 880.03,709.36 887.51,788.61 894.98,806.90 902.45,806.90 909.93,806.90 917.40,806.90 924.87,764.23 932.34,806.90 939.82,806.90 947.29,806.90 954.76,788.61 962.24,767.28 969.71,733.75 977.18,806.90 984.66,806.90 992.13,806.90" fill="none" stroke="#e5391b" stroke-width="0.9" stroke-opacity="0.72" stroke-linejoin="round"/>
<path d="M78.62,657.55a1.8,1.8 0 1,0 3.6,0a1.8,1.8 0 1,0 -3.6,0M86.10,556.96a1.8,1.8 0 1,0 3.6,0a1.8,1.8 0 1,0 -3.6,0M93.57,639.26a1.8,1.8 0 1,0 3.6,0a1.8,1.8 0 1,0 -3.6,0M101.04,697.17a1.8,1.8 0 1,0 3.6,0a1.8,1.8 0 1,0 -3.6,0M108.52,596.59a1.8,1.8 0 1,0 3.6,0a1.8,1.8 0 1,0 -3.6,0M115.99,633.16a1.8,1.8 0 1,0 3.6,0a1.8,1.8 0 1,0 -3.6,0M123.46,590.49a1.8,1.8 0 1,0 3.6,0a1.8,1.8 0 1,0 -3.6,0M130.93,715.46a1.8,1.8 0 1,0 3.6,0a1.8,1.8 0 1,0 -3.6,0M138.41,608.78a1.8,1.8 0 1,0 3.6,0a1.8,1.8 0 1,0 -3.6,0M145.88,575.25a1.8,1.8 0 1,0 3.6,0a1.8,1.8 0 1,0 -3.6,0M153.35,700.22a1.8,1.8 0 1,0 3.6,0a1.8,1.8 0 1,0 -3.6,0M160.83,642.31a1.8,1.8 0 1,0 3.6,0a1.8,1.8 0 1,0 -3.6,0M168.30,663.64a1.8,1.8 0 1,0 3.6,0a1.8,1.8 0 1,0 -3.6,0M175.77,675.84a1.8,1.8 0 1,0 3.6,0a1.8,1.8 0 1,0 -3.6,0M183.24,669.74a1.8,1.8 0 1,0 3.6,0a1.8,1.8 0 1,0 -3.6,0M190.72,645.36a1.8,1.8 0 1,0 3.6,0a1.8,1.8 0 1,0 -3.6,0M198.19,666.69a1.8,1.8 0 1,0 3.6,0a1.8,1.8 0 1,0 -3.6,0M205.66,669.74a1.8,1.8 0 1,0 3.6,0a1.8,1.8 0 1,0 -3.6,0M213.14,624.02a1.8,1.8 0 1,0 3.6,0a1.8,1.8 0 1,0 -3.6,0M220.61,721.56a1.8,1.8 0 1,0 3.6,0a1.8,1.8 0 1,0 -3.6,0M228.08,556.96a1.8,1.8 0 1,0 3.6,0a1.8,1.8 0 1,0 -3.6,0M235.56,624.02a1.8,1.8 0 1,0 3.6,0a1.8,1.8 0 1,0 -3.6,0M243.03,788.61a1.8,1.8 0 1,0 3.6,0a1.8,1.8 0 1,0 -3.6,0M250.50,636.21a1.8,1.8 0 1,0 3.6,0a1.8,1.8 0 1,0 -3.6,0M257.97,688.03a1.8,1.8 0 1,0 3.6,0a1.8,1.8 0 1,0 -3.6,0M265.45,639.26a1.8,1.8 0 1,0 3.6,0a1.8,1.8 0 1,0 -3.6,0M272.92,660.60a1.8,1.8 0 1,0 3.6,0a1.8,1.8 0 1,0 -3.6,0M280.39,745.94a1.8,1.8 0 1,0 3.6,0a1.8,1.8 0 1,0 -3.6,0M287.87,724.60a1.8,1.8 0 1,0 3.6,0a1.8,1.8 0 1,0 -3.6,0M295.34,663.64a1.8,1.8 0 1,0 3.6,0a1.8,1.8 0 1,0 -3.6,0M302.81,681.93a1.8,1.8 0 1,0 3.6,0a1.8,1.8 0 1,0 -3.6,0M310.29,788.61a1.8,1.8 0 1,0 3.6,0a1.8,1.8 0 1,0 -3.6,0M317.76,684.98a1.8,1.8 0 1,0 3.6,0a1.8,1.8 0 1,0 -3.6,0M325.23,648.40a1.8,1.8 0 1,0 3.6,0a1.8,1.8 0 1,0 -3.6,0M332.70,715.46a1.8,1.8 0 1,0 3.6,0a1.8,1.8 0 1,0 -3.6,0M340.18,748.99a1.8,1.8 0 1,0 3.6,0a1.8,1.8 0 1,0 -3.6,0M347.65,688.03a1.8,1.8 0 1,0 3.6,0a1.8,1.8 0 1,0 -3.6,0M355.12,767.28a1.8,1.8 0 1,0 3.6,0a1.8,1.8 0 1,0 -3.6,0M362.60,779.47a1.8,1.8 0 1,0 3.6,0a1.8,1.8 0 1,0 -3.6,0M370.07,654.50a1.8,1.8 0 1,0 3.6,0a1.8,1.8 0 1,0 -3.6,0M377.54,660.60a1.8,1.8 0 1,0 3.6,0a1.8,1.8 0 1,0 -3.6,0M385.02,666.69a1.8,1.8 0 1,0 3.6,0a1.8,1.8 0 1,0 -3.6,0M392.49,697.17a1.8,1.8 0 1,0 3.6,0a1.8,1.8 0 1,0 -3.6,0M399.96,806.90a1.8,1.8 0 1,0 3.6,0a1.8,1.8 0 1,0 -3.6,0M407.43,752.04a1.8,1.8 0 1,0 3.6,0a1.8,1.8 0 1,0 -3.6,0M414.91,660.60a1.8,1.8 0 1,0 3.6,0a1.8,1.8 0 1,0 -3.6,0M422.38,739.84a1.8,1.8 0 1,0 3.6,0a1.8,1.8 0 1,0 -3.6,0M429.85,785.56a1.8,1.8 0 1,0 3.6,0a1.8,1.8 0 1,0 -3.6,0M437.33,761.18a1.8,1.8 0 1,0 3.6,0a1.8,1.8 0 1,0 -3.6,0M444.80,806.90a1.8,1.8 0 1,0 3.6,0a1.8,1.8 0 1,0 -3.6,0M452.27,691.08a1.8,1.8 0 1,0 3.6,0a1.8,1.8 0 1,0 -3.6,0M459.75,764.23a1.8,1.8 0 1,0 3.6,0a1.8,1.8 0 1,0 -3.6,0M467.22,770.32a1.8,1.8 0 1,0 3.6,0a1.8,1.8 0 1,0 -3.6,0M474.69,709.36a1.8,1.8 0 1,0 3.6,0a1.8,1.8 0 1,0 -3.6,0M482.16,745.94a1.8,1.8 0 1,0 3.6,0a1.8,1.8 0 1,0 -3.6,0M489.64,788.61a1.8,1.8 0 1,0 3.6,0a1.8,1.8 0 1,0 -3.6,0M497.11,678.88a1.8,1.8 0 1,0 3.6,0a1.8,1.8 0 1,0 -3.6,0M504.58,709.36a1.8,1.8 0 1,0 3.6,0a1.8,1.8 0 1,0 -3.6,0M512.06,767.28a1.8,1.8 0 1,0 3.6,0a1.8,1.8 0 1,0 -3.6,0M519.53,779.47a1.8,1.8 0 1,0 3.6,0a1.8,1.8 0 1,0 -3.6,0M527.00,785.56a1.8,1.8 0 1,0 3.6,0a1.8,1.8 0 1,0 -3.6,0M534.48,806.90a1.8,1.8 0 1,0 3.6,0a1.8,1.8 0 1,0 -3.6,0M541.95,806.90a1.8,1.8 0 1,0 3.6,0a1.8,1.8 0 1,0 -3.6,0M549.42,730.70a1.8,1.8 0 1,0 3.6,0a1.8,1.8 0 1,0 -3.6,0M556.89,736.80a1.8,1.8 0 1,0 3.6,0a1.8,1.8 0 1,0 -3.6,0M564.37,724.60a1.8,1.8 0 1,0 3.6,0a1.8,1.8 0 1,0 -3.6,0M571.84,678.88a1.8,1.8 0 1,0 3.6,0a1.8,1.8 0 1,0 -3.6,0M579.31,788.61a1.8,1.8 0 1,0 3.6,0a1.8,1.8 0 1,0 -3.6,0M586.79,761.18a1.8,1.8 0 1,0 3.6,0a1.8,1.8 0 1,0 -3.6,0M594.26,672.79a1.8,1.8 0 1,0 3.6,0a1.8,1.8 0 1,0 -3.6,0M601.73,745.94a1.8,1.8 0 1,0 3.6,0a1.8,1.8 0 1,0 -3.6,0M609.21,745.94a1.8,1.8 0 1,0 3.6,0a1.8,1.8 0 1,0 -3.6,0M616.68,697.17a1.8,1.8 0 1,0 3.6,0a1.8,1.8 0 1,0 -3.6,0M624.15,727.65a1.8,1.8 0 1,0 3.6,0a1.8,1.8 0 1,0 -3.6,0M631.62,736.80a1.8,1.8 0 1,0 3.6,0a1.8,1.8 0 1,0 -3.6,0M639.10,785.56a1.8,1.8 0 1,0 3.6,0a1.8,1.8 0 1,0 -3.6,0M646.57,736.80a1.8,1.8 0 1,0 3.6,0a1.8,1.8 0 1,0 -3.6,0M654.04,742.89a1.8,1.8 0 1,0 3.6,0a1.8,1.8 0 1,0 -3.6,0M661.52,806.90a1.8,1.8 0 1,0 3.6,0a1.8,1.8 0 1,0 -3.6,0M668.99,709.36a1.8,1.8 0 1,0 3.6,0a1.8,1.8 0 1,0 -3.6,0M676.46,806.90a1.8,1.8 0 1,0 3.6,0a1.8,1.8 0 1,0 -3.6,0M683.94,770.32a1.8,1.8 0 1,0 3.6,0a1.8,1.8 0 1,0 -3.6,0M691.41,742.89a1.8,1.8 0 1,0 3.6,0a1.8,1.8 0 1,0 -3.6,0M698.88,806.90a1.8,1.8 0 1,0 3.6,0a1.8,1.8 0 1,0 -3.6,0M706.36,788.61a1.8,1.8 0 1,0 3.6,0a1.8,1.8 0 1,0 -3.6,0M713.83,788.61a1.8,1.8 0 1,0 3.6,0a1.8,1.8 0 1,0 -3.6,0M721.30,739.84a1.8,1.8 0 1,0 3.6,0a1.8,1.8 0 1,0 -3.6,0M728.77,752.04a1.8,1.8 0 1,0 3.6,0a1.8,1.8 0 1,0 -3.6,0M736.25,700.22a1.8,1.8 0 1,0 3.6,0a1.8,1.8 0 1,0 -3.6,0M743.72,788.61a1.8,1.8 0 1,0 3.6,0a1.8,1.8 0 1,0 -3.6,0M751.19,806.90a1.8,1.8 0 1,0 3.6,0a1.8,1.8 0 1,0 -3.6,0M758.67,788.61a1.8,1.8 0 1,0 3.6,0a1.8,1.8 0 1,0 -3.6,0M766.14,739.84a1.8,1.8 0 1,0 3.6,0a1.8,1.8 0 1,0 -3.6,0M773.61,806.90a1.8,1.8 0 1,0 3.6,0a1.8,1.8 0 1,0 -3.6,0M781.08,806.90a1.8,1.8 0 1,0 3.6,0a1.8,1.8 0 1,0 -3.6,0M788.56,788.61a1.8,1.8 0 1,0 3.6,0a1.8,1.8 0 1,0 -3.6,0M796.03,785.56a1.8,1.8 0 1,0 3.6,0a1.8,1.8 0 1,0 -3.6,0M803.50,806.90a1.8,1.8 0 1,0 3.6,0a1.8,1.8 0 1,0 -3.6,0M810.98,779.47a1.8,1.8 0 1,0 3.6,0a1.8,1.8 0 1,0 -3.6,0M818.45,770.32a1.8,1.8 0 1,0 3.6,0a1.8,1.8 0 1,0 -3.6,0M825.92,776.42a1.8,1.8 0 1,0 3.6,0a1.8,1.8 0 1,0 -3.6,0M833.40,806.90a1.8,1.8 0 1,0 3.6,0a1.8,1.8 0 1,0 -3.6,0M840.87,806.90a1.8,1.8 0 1,0 3.6,0a1.8,1.8 0 1,0 -3.6,0M848.34,806.90a1.8,1.8 0 1,0 3.6,0a1.8,1.8 0 1,0 -3.6,0M855.81,806.90a1.8,1.8 0 1,0 3.6,0a1.8,1.8 0 1,0 -3.6,0M863.29,806.90a1.8,1.8 0 1,0 3.6,0a1.8,1.8 0 1,0 -3.6,0M870.76,806.90a1.8,1.8 0 1,0 3.6,0a1.8,1.8 0 1,0 -3.6,0M878.23,709.36a1.8,1.8 0 1,0 3.6,0a1.8,1.8 0 1,0 -3.6,0M885.71,806.90a1.8,1.8 0 1,0 3.6,0a1.8,1.8 0 1,0 -3.6,0M893.18,806.90a1.8,1.8 0 1,0 3.6,0a1.8,1.8 0 1,0 -3.6,0M900.65,806.90a1.8,1.8 0 1,0 3.6,0a1.8,1.8 0 1,0 -3.6,0M908.13,806.90a1.8,1.8 0 1,0 3.6,0a1.8,1.8 0 1,0 -3.6,0M915.60,806.90a1.8,1.8 0 1,0 3.6,0a1.8,1.8 0 1,0 -3.6,0M923.07,764.23a1.8,1.8 0 1,0 3.6,0a1.8,1.8 0 1,0 -3.6,0M930.54,806.90a1.8,1.8 0 1,0 3.6,0a1.8,1.8 0 1,0 -3.6,0M938.02,806.90a1.8,1.8 0 1,0 3.6,0a1.8,1.8 0 1,0 -3.6,0M945.49,806.90a1.8,1.8 0 1,0 3.6,0a1.8,1.8 0 1,0 -3.6,0M952.96,806.90a1.8,1.8 0 1,0 3.6,0a1.8,1.8 0 1,0 -3.6,0M960.44,785.56a1.8,1.8 0 1,0 3.6,0a1.8,1.8 0 1,0 -3.6,0M967.91,733.75a1.8,1.8 0 1,0 3.6,0a1.8,1.8 0 1,0 -3.6,0M975.38,806.90a1.8,1.8 0 1,0 3.6,0a1.8,1.8 0 1,0 -3.6,0M982.86,806.90a1.8,1.8 0 1,0 3.6,0a1.8,1.8 0 1,0 -3.6,0M990.33,806.90a1.8,1.8 0 1,0 3.6,0a1.8,1.8 0 1,0 -3.6,0" fill="#f4c020"/>
<path d="M78.62,651.45a1.8,1.8 0 1,0 3.6,0a1.8,1.8 0 1,0 -3.6,0M86.10,547.82a1.8,1.8 0 1,0 3.6,0a1.8,1.8 0 1,0 -3.6,0M93.57,627.07a1.8,1.8 0 1,0 3.6,0a1.8,1.8 0 1,0 -3.6,0M101.04,709.36a1.8,1.8 0 1,0 3.6,0a1.8,1.8 0 1,0 -3.6,0M108.52,608.78a1.8,1.8 0 1,0 3.6,0a1.8,1.8 0 1,0 -3.6,0M115.99,636.21a1.8,1.8 0 1,0 3.6,0a1.8,1.8 0 1,0 -3.6,0M123.46,578.30a1.8,1.8 0 1,0 3.6,0a1.8,1.8 0 1,0 -3.6,0M130.93,715.46a1.8,1.8 0 1,0 3.6,0a1.8,1.8 0 1,0 -3.6,0M138.41,608.78a1.8,1.8 0 1,0 3.6,0a1.8,1.8 0 1,0 -3.6,0M145.88,608.78a1.8,1.8 0 1,0 3.6,0a1.8,1.8 0 1,0 -3.6,0M153.35,666.69a1.8,1.8 0 1,0 3.6,0a1.8,1.8 0 1,0 -3.6,0M160.83,645.36a1.8,1.8 0 1,0 3.6,0a1.8,1.8 0 1,0 -3.6,0M168.30,651.45a1.8,1.8 0 1,0 3.6,0a1.8,1.8 0 1,0 -3.6,0M175.77,630.12a1.8,1.8 0 1,0 3.6,0a1.8,1.8 0 1,0 -3.6,0M183.24,654.50a1.8,1.8 0 1,0 3.6,0a1.8,1.8 0 1,0 -3.6,0M190.72,627.07a1.8,1.8 0 1,0 3.6,0a1.8,1.8 0 1,0 -3.6,0M198.19,663.64a1.8,1.8 0 1,0 3.6,0a1.8,1.8 0 1,0 -3.6,0M205.66,636.21a1.8,1.8 0 1,0 3.6,0a1.8,1.8 0 1,0 -3.6,0M213.14,620.97a1.8,1.8 0 1,0 3.6,0a1.8,1.8 0 1,0 -3.6,0M220.61,721.56a1.8,1.8 0 1,0 3.6,0a1.8,1.8 0 1,0 -3.6,0M228.08,556.96a1.8,1.8 0 1,0 3.6,0a1.8,1.8 0 1,0 -3.6,0M235.56,620.97a1.8,1.8 0 1,0 3.6,0a1.8,1.8 0 1,0 -3.6,0M243.03,788.61a1.8,1.8 0 1,0 3.6,0a1.8,1.8 0 1,0 -3.6,0M250.50,657.55a1.8,1.8 0 1,0 3.6,0a1.8,1.8 0 1,0 -3.6,0M257.97,688.03a1.8,1.8 0 1,0 3.6,0a1.8,1.8 0 1,0 -3.6,0M265.45,633.16a1.8,1.8 0 1,0 3.6,0a1.8,1.8 0 1,0 -3.6,0M272.92,627.07a1.8,1.8 0 1,0 3.6,0a1.8,1.8 0 1,0 -3.6,0M280.39,742.89a1.8,1.8 0 1,0 3.6,0a1.8,1.8 0 1,0 -3.6,0M287.87,700.22a1.8,1.8 0 1,0 3.6,0a1.8,1.8 0 1,0 -3.6,0M295.34,663.64a1.8,1.8 0 1,0 3.6,0a1.8,1.8 0 1,0 -3.6,0M302.81,675.84a1.8,1.8 0 1,0 3.6,0a1.8,1.8 0 1,0 -3.6,0M310.29,776.42a1.8,1.8 0 1,0 3.6,0a1.8,1.8 0 1,0 -3.6,0M317.76,675.84a1.8,1.8 0 1,0 3.6,0a1.8,1.8 0 1,0 -3.6,0M325.23,608.78a1.8,1.8 0 1,0 3.6,0a1.8,1.8 0 1,0 -3.6,0M332.70,712.41a1.8,1.8 0 1,0 3.6,0a1.8,1.8 0 1,0 -3.6,0M340.18,748.99a1.8,1.8 0 1,0 3.6,0a1.8,1.8 0 1,0 -3.6,0M347.65,688.03a1.8,1.8 0 1,0 3.6,0a1.8,1.8 0 1,0 -3.6,0M355.12,767.28a1.8,1.8 0 1,0 3.6,0a1.8,1.8 0 1,0 -3.6,0M362.60,776.42a1.8,1.8 0 1,0 3.6,0a1.8,1.8 0 1,0 -3.6,0M370.07,639.26a1.8,1.8 0 1,0 3.6,0a1.8,1.8 0 1,0 -3.6,0M377.54,645.36a1.8,1.8 0 1,0 3.6,0a1.8,1.8 0 1,0 -3.6,0M385.02,648.40a1.8,1.8 0 1,0 3.6,0a1.8,1.8 0 1,0 -3.6,0M392.49,691.08a1.8,1.8 0 1,0 3.6,0a1.8,1.8 0 1,0 -3.6,0M399.96,806.90a1.8,1.8 0 1,0 3.6,0a1.8,1.8 0 1,0 -3.6,0M407.43,706.32a1.8,1.8 0 1,0 3.6,0a1.8,1.8 0 1,0 -3.6,0M414.91,660.60a1.8,1.8 0 1,0 3.6,0a1.8,1.8 0 1,0 -3.6,0M422.38,715.46a1.8,1.8 0 1,0 3.6,0a1.8,1.8 0 1,0 -3.6,0M429.85,785.56a1.8,1.8 0 1,0 3.6,0a1.8,1.8 0 1,0 -3.6,0M437.33,733.75a1.8,1.8 0 1,0 3.6,0a1.8,1.8 0 1,0 -3.6,0M444.80,788.61a1.8,1.8 0 1,0 3.6,0a1.8,1.8 0 1,0 -3.6,0M452.27,684.98a1.8,1.8 0 1,0 3.6,0a1.8,1.8 0 1,0 -3.6,0M459.75,752.04a1.8,1.8 0 1,0 3.6,0a1.8,1.8 0 1,0 -3.6,0M467.22,779.47a1.8,1.8 0 1,0 3.6,0a1.8,1.8 0 1,0 -3.6,0M474.69,706.32a1.8,1.8 0 1,0 3.6,0a1.8,1.8 0 1,0 -3.6,0M482.16,700.22a1.8,1.8 0 1,0 3.6,0a1.8,1.8 0 1,0 -3.6,0M489.64,788.61a1.8,1.8 0 1,0 3.6,0a1.8,1.8 0 1,0 -3.6,0M497.11,697.17a1.8,1.8 0 1,0 3.6,0a1.8,1.8 0 1,0 -3.6,0M504.58,675.84a1.8,1.8 0 1,0 3.6,0a1.8,1.8 0 1,0 -3.6,0M512.06,764.23a1.8,1.8 0 1,0 3.6,0a1.8,1.8 0 1,0 -3.6,0M519.53,788.61a1.8,1.8 0 1,0 3.6,0a1.8,1.8 0 1,0 -3.6,0M527.00,788.61a1.8,1.8 0 1,0 3.6,0a1.8,1.8 0 1,0 -3.6,0M534.48,806.90a1.8,1.8 0 1,0 3.6,0a1.8,1.8 0 1,0 -3.6,0M541.95,748.99a1.8,1.8 0 1,0 3.6,0a1.8,1.8 0 1,0 -3.6,0M549.42,724.60a1.8,1.8 0 1,0 3.6,0a1.8,1.8 0 1,0 -3.6,0M556.89,733.75a1.8,1.8 0 1,0 3.6,0a1.8,1.8 0 1,0 -3.6,0M564.37,736.80a1.8,1.8 0 1,0 3.6,0a1.8,1.8 0 1,0 -3.6,0M571.84,672.79a1.8,1.8 0 1,0 3.6,0a1.8,1.8 0 1,0 -3.6,0M579.31,788.61a1.8,1.8 0 1,0 3.6,0a1.8,1.8 0 1,0 -3.6,0M586.79,761.18a1.8,1.8 0 1,0 3.6,0a1.8,1.8 0 1,0 -3.6,0M594.26,688.03a1.8,1.8 0 1,0 3.6,0a1.8,1.8 0 1,0 -3.6,0M601.73,739.84a1.8,1.8 0 1,0 3.6,0a1.8,1.8 0 1,0 -3.6,0M609.21,764.23a1.8,1.8 0 1,0 3.6,0a1.8,1.8 0 1,0 -3.6,0M616.68,694.12a1.8,1.8 0 1,0 3.6,0a1.8,1.8 0 1,0 -3.6,0M624.15,724.60a1.8,1.8 0 1,0 3.6,0a1.8,1.8 0 1,0 -3.6,0M631.62,730.70a1.8,1.8 0 1,0 3.6,0a1.8,1.8 0 1,0 -3.6,0M639.10,782.52a1.8,1.8 0 1,0 3.6,0a1.8,1.8 0 1,0 -3.6,0M646.57,715.46a1.8,1.8 0 1,0 3.6,0a1.8,1.8 0 1,0 -3.6,0M654.04,739.84a1.8,1.8 0 1,0 3.6,0a1.8,1.8 0 1,0 -3.6,0M661.52,806.90a1.8,1.8 0 1,0 3.6,0a1.8,1.8 0 1,0 -3.6,0M668.99,715.46a1.8,1.8 0 1,0 3.6,0a1.8,1.8 0 1,0 -3.6,0M676.46,806.90a1.8,1.8 0 1,0 3.6,0a1.8,1.8 0 1,0 -3.6,0M683.94,785.56a1.8,1.8 0 1,0 3.6,0a1.8,1.8 0 1,0 -3.6,0M691.41,767.28a1.8,1.8 0 1,0 3.6,0a1.8,1.8 0 1,0 -3.6,0M698.88,806.90a1.8,1.8 0 1,0 3.6,0a1.8,1.8 0 1,0 -3.6,0M706.36,788.61a1.8,1.8 0 1,0 3.6,0a1.8,1.8 0 1,0 -3.6,0M713.83,788.61a1.8,1.8 0 1,0 3.6,0a1.8,1.8 0 1,0 -3.6,0M721.30,730.70a1.8,1.8 0 1,0 3.6,0a1.8,1.8 0 1,0 -3.6,0M728.77,758.13a1.8,1.8 0 1,0 3.6,0a1.8,1.8 0 1,0 -3.6,0M736.25,694.12a1.8,1.8 0 1,0 3.6,0a1.8,1.8 0 1,0 -3.6,0M743.72,806.90a1.8,1.8 0 1,0 3.6,0a1.8,1.8 0 1,0 -3.6,0M751.19,806.90a1.8,1.8 0 1,0 3.6,0a1.8,1.8 0 1,0 -3.6,0M758.67,785.56a1.8,1.8 0 1,0 3.6,0a1.8,1.8 0 1,0 -3.6,0M766.14,758.13a1.8,1.8 0 1,0 3.6,0a1.8,1.8 0 1,0 -3.6,0M773.61,806.90a1.8,1.8 0 1,0 3.6,0a1.8,1.8 0 1,0 -3.6,0M781.08,806.90a1.8,1.8 0 1,0 3.6,0a1.8,1.8 0 1,0 -3.6,0M788.56,733.75a1.8,1.8 0 1,0 3.6,0a1.8,1.8 0 1,0 -3.6,0M796.03,785.56a1.8,1.8 0 1,0 3.6,0a1.8,1.8 0 1,0 -3.6,0M803.50,806.90a1.8,1.8 0 1,0 3.6,0a1.8,1.8 0 1,0 -3.6,0M810.98,779.47a1.8,1.8 0 1,0 3.6,0a1.8,1.8 0 1,0 -3.6,0M818.45,785.56a1.8,1.8 0 1,0 3.6,0a1.8,1.8 0 1,0 -3.6,0M825.92,764.23a1.8,1.8 0 1,0 3.6,0a1.8,1.8 0 1,0 -3.6,0M833.40,806.90a1.8,1.8 0 1,0 3.6,0a1.8,1.8 0 1,0 -3.6,0M840.87,806.90a1.8,1.8 0 1,0 3.6,0a1.8,1.8 0 1,0 -3.6,0M848.34,806.90a1.8,1.8 0 1,0 3.6,0a1.8,1.8 0 1,0 -3.6,0M855.81,806.90a1.8,1.8 0 1,0 3.6,0a1.8,1.8 0 1,0 -3.6,0M863.29,806.90a1.8,1.8 0 1,0 3.6,0a1.8,1.8 0 1,0 -3.6,0M870.76,806.90a1.8,1.8 0 1,0 3.6,0a1.8,1.8 0 1,0 -3.6,0M878.23,709.36a1.8,1.8 0 1,0 3.6,0a1.8,1.8 0 1,0 -3.6,0M885.71,788.61a1.8,1.8 0 1,0 3.6,0a1.8,1.8 0 1,0 -3.6,0M893.18,806.90a1.8,1.8 0 1,0 3.6,0a1.8,1.8 0 1,0 -3.6,0M900.65,806.90a1.8,1.8 0 1,0 3.6,0a1.8,1.8 0 1,0 -3.6,0M908.13,806.90a1.8,1.8 0 1,0 3.6,0a1.8,1.8 0 1,0 -3.6,0M915.60,806.90a1.8,1.8 0 1,0 3.6,0a1.8,1.8 0 1,0 -3.6,0M923.07,779.47a1.8,1.8 0 1,0 3.6,0a1.8,1.8 0 1,0 -3.6,0M930.54,776.42a1.8,1.8 0 1,0 3.6,0a1.8,1.8 0 1,0 -3.6,0M938.02,806.90a1.8,1.8 0 1,0 3.6,0a1.8,1.8 0 1,0 -3.6,0M945.49,806.90a1.8,1.8 0 1,0 3.6,0a1.8,1.8 0 1,0 -3.6,0M952.96,806.90a1.8,1.8 0 1,0 3.6,0a1.8,1.8 0 1,0 -3.6,0M960.44,788.61a1.8,1.8 0 1,0 3.6,0a1.8,1.8 0 1,0 -3.6,0M967.91,730.70a1.8,1.8 0 1,0 3.6,0a1.8,1.8 0 1,0 -3.6,0M975.38,806.90a1.8,1.8 0 1,0 3.6,0a1.8,1.8 0 1,0 -3.6,0M982.86,806.90a1.8,1.8 0 1,0 3.6,0a1.8,1.8 0 1,0 -3.6,0M990.33,806.90a1.8,1.8 0 1,0 3.6,0a1.8,1.8 0 1,0 -3.6,0" fill="#000000"/>
<path d="M78.62,672.79a1.8,1.8 0 1,0 3.6,0a1.8,1.8 0 1,0 -3.6,0M86.10,511.24a1.8,1.8 0 1,0 3.6,0a1.8,1.8 0 1,0 -3.6,0M93.57,593.54a1.8,1.8 0 1,0 3.6,0a1.8,1.8 0 1,0 -3.6,0M101.04,672.79a1.8,1.8 0 1,0 3.6,0a1.8,1.8 0 1,0 -3.6,0M108.52,608.78a1.8,1.8 0 1,0 3.6,0a1.8,1.8 0 1,0 -3.6,0M115.99,602.68a1.8,1.8 0 1,0 3.6,0a1.8,1.8 0 1,0 -3.6,0M123.46,563.06a1.8,1.8 0 1,0 3.6,0a1.8,1.8 0 1,0 -3.6,0M130.93,712.41a1.8,1.8 0 1,0 3.6,0a1.8,1.8 0 1,0 -3.6,0M138.41,602.68a1.8,1.8 0 1,0 3.6,0a1.8,1.8 0 1,0 -3.6,0M145.88,563.06a1.8,1.8 0 1,0 3.6,0a1.8,1.8 0 1,0 -3.6,0M153.35,663.64a1.8,1.8 0 1,0 3.6,0a1.8,1.8 0 1,0 -3.6,0M160.83,624.02a1.8,1.8 0 1,0 3.6,0a1.8,1.8 0 1,0 -3.6,0M168.30,636.21a1.8,1.8 0 1,0 3.6,0a1.8,1.8 0 1,0 -3.6,0M175.77,596.59a1.8,1.8 0 1,0 3.6,0a1.8,1.8 0 1,0 -3.6,0M183.24,657.55a1.8,1.8 0 1,0 3.6,0a1.8,1.8 0 1,0 -3.6,0M190.72,642.31a1.8,1.8 0 1,0 3.6,0a1.8,1.8 0 1,0 -3.6,0M198.19,657.55a1.8,1.8 0 1,0 3.6,0a1.8,1.8 0 1,0 -3.6,0M205.66,614.88a1.8,1.8 0 1,0 3.6,0a1.8,1.8 0 1,0 -3.6,0M213.14,602.68a1.8,1.8 0 1,0 3.6,0a1.8,1.8 0 1,0 -3.6,0M220.61,718.51a1.8,1.8 0 1,0 3.6,0a1.8,1.8 0 1,0 -3.6,0M228.08,538.68a1.8,1.8 0 1,0 3.6,0a1.8,1.8 0 1,0 -3.6,0M235.56,608.78a1.8,1.8 0 1,0 3.6,0a1.8,1.8 0 1,0 -3.6,0M243.03,779.47a1.8,1.8 0 1,0 3.6,0a1.8,1.8 0 1,0 -3.6,0M250.50,636.21a1.8,1.8 0 1,0 3.6,0a1.8,1.8 0 1,0 -3.6,0M257.97,639.26a1.8,1.8 0 1,0 3.6,0a1.8,1.8 0 1,0 -3.6,0M265.45,624.02a1.8,1.8 0 1,0 3.6,0a1.8,1.8 0 1,0 -3.6,0M272.92,678.88a1.8,1.8 0 1,0 3.6,0a1.8,1.8 0 1,0 -3.6,0M280.39,736.80a1.8,1.8 0 1,0 3.6,0a1.8,1.8 0 1,0 -3.6,0M287.87,672.79a1.8,1.8 0 1,0 3.6,0a1.8,1.8 0 1,0 -3.6,0M295.34,596.59a1.8,1.8 0 1,0 3.6,0a1.8,1.8 0 1,0 -3.6,0M302.81,669.74a1.8,1.8 0 1,0 3.6,0a1.8,1.8 0 1,0 -3.6,0M310.29,727.65a1.8,1.8 0 1,0 3.6,0a1.8,1.8 0 1,0 -3.6,0M317.76,669.74a1.8,1.8 0 1,0 3.6,0a1.8,1.8 0 1,0 -3.6,0M325.23,614.88a1.8,1.8 0 1,0 3.6,0a1.8,1.8 0 1,0 -3.6,0M332.70,715.46a1.8,1.8 0 1,0 3.6,0a1.8,1.8 0 1,0 -3.6,0M340.18,767.28a1.8,1.8 0 1,0 3.6,0a1.8,1.8 0 1,0 -3.6,0M347.65,678.88a1.8,1.8 0 1,0 3.6,0a1.8,1.8 0 1,0 -3.6,0M355.12,806.90a1.8,1.8 0 1,0 3.6,0a1.8,1.8 0 1,0 -3.6,0M362.60,785.56a1.8,1.8 0 1,0 3.6,0a1.8,1.8 0 1,0 -3.6,0M370.07,651.45a1.8,1.8 0 1,0 3.6,0a1.8,1.8 0 1,0 -3.6,0M377.54,642.31a1.8,1.8 0 1,0 3.6,0a1.8,1.8 0 1,0 -3.6,0M385.02,672.79a1.8,1.8 0 1,0 3.6,0a1.8,1.8 0 1,0 -3.6,0M392.49,678.88a1.8,1.8 0 1,0 3.6,0a1.8,1.8 0 1,0 -3.6,0M399.96,752.04a1.8,1.8 0 1,0 3.6,0a1.8,1.8 0 1,0 -3.6,0M407.43,694.12a1.8,1.8 0 1,0 3.6,0a1.8,1.8 0 1,0 -3.6,0M414.91,639.26a1.8,1.8 0 1,0 3.6,0a1.8,1.8 0 1,0 -3.6,0M422.38,739.84a1.8,1.8 0 1,0 3.6,0a1.8,1.8 0 1,0 -3.6,0M429.85,742.89a1.8,1.8 0 1,0 3.6,0a1.8,1.8 0 1,0 -3.6,0M437.33,715.46a1.8,1.8 0 1,0 3.6,0a1.8,1.8 0 1,0 -3.6,0M444.80,806.90a1.8,1.8 0 1,0 3.6,0a1.8,1.8 0 1,0 -3.6,0M452.27,691.08a1.8,1.8 0 1,0 3.6,0a1.8,1.8 0 1,0 -3.6,0M459.75,733.75a1.8,1.8 0 1,0 3.6,0a1.8,1.8 0 1,0 -3.6,0M467.22,758.13a1.8,1.8 0 1,0 3.6,0a1.8,1.8 0 1,0 -3.6,0M474.69,709.36a1.8,1.8 0 1,0 3.6,0a1.8,1.8 0 1,0 -3.6,0M482.16,684.98a1.8,1.8 0 1,0 3.6,0a1.8,1.8 0 1,0 -3.6,0M489.64,785.56a1.8,1.8 0 1,0 3.6,0a1.8,1.8 0 1,0 -3.6,0M497.11,694.12a1.8,1.8 0 1,0 3.6,0a1.8,1.8 0 1,0 -3.6,0M504.58,715.46a1.8,1.8 0 1,0 3.6,0a1.8,1.8 0 1,0 -3.6,0M512.06,721.56a1.8,1.8 0 1,0 3.6,0a1.8,1.8 0 1,0 -3.6,0M519.53,788.61a1.8,1.8 0 1,0 3.6,0a1.8,1.8 0 1,0 -3.6,0M527.00,764.23a1.8,1.8 0 1,0 3.6,0a1.8,1.8 0 1,0 -3.6,0M534.48,745.94a1.8,1.8 0 1,0 3.6,0a1.8,1.8 0 1,0 -3.6,0M541.95,721.56a1.8,1.8 0 1,0 3.6,0a1.8,1.8 0 1,0 -3.6,0M549.42,715.46a1.8,1.8 0 1,0 3.6,0a1.8,1.8 0 1,0 -3.6,0M556.89,718.51a1.8,1.8 0 1,0 3.6,0a1.8,1.8 0 1,0 -3.6,0M564.37,733.75a1.8,1.8 0 1,0 3.6,0a1.8,1.8 0 1,0 -3.6,0M571.84,666.69a1.8,1.8 0 1,0 3.6,0a1.8,1.8 0 1,0 -3.6,0M579.31,788.61a1.8,1.8 0 1,0 3.6,0a1.8,1.8 0 1,0 -3.6,0M586.79,788.61a1.8,1.8 0 1,0 3.6,0a1.8,1.8 0 1,0 -3.6,0M594.26,691.08a1.8,1.8 0 1,0 3.6,0a1.8,1.8 0 1,0 -3.6,0M601.73,684.98a1.8,1.8 0 1,0 3.6,0a1.8,1.8 0 1,0 -3.6,0M609.21,709.36a1.8,1.8 0 1,0 3.6,0a1.8,1.8 0 1,0 -3.6,0M616.68,678.88a1.8,1.8 0 1,0 3.6,0a1.8,1.8 0 1,0 -3.6,0M624.15,742.89a1.8,1.8 0 1,0 3.6,0a1.8,1.8 0 1,0 -3.6,0M631.62,724.60a1.8,1.8 0 1,0 3.6,0a1.8,1.8 0 1,0 -3.6,0M639.10,785.56a1.8,1.8 0 1,0 3.6,0a1.8,1.8 0 1,0 -3.6,0M646.57,718.51a1.8,1.8 0 1,0 3.6,0a1.8,1.8 0 1,0 -3.6,0M654.04,745.94a1.8,1.8 0 1,0 3.6,0a1.8,1.8 0 1,0 -3.6,0M661.52,806.90a1.8,1.8 0 1,0 3.6,0a1.8,1.8 0 1,0 -3.6,0M668.99,706.32a1.8,1.8 0 1,0 3.6,0a1.8,1.8 0 1,0 -3.6,0M676.46,806.90a1.8,1.8 0 1,0 3.6,0a1.8,1.8 0 1,0 -3.6,0M683.94,764.23a1.8,1.8 0 1,0 3.6,0a1.8,1.8 0 1,0 -3.6,0M691.41,748.99a1.8,1.8 0 1,0 3.6,0a1.8,1.8 0 1,0 -3.6,0M698.88,806.90a1.8,1.8 0 1,0 3.6,0a1.8,1.8 0 1,0 -3.6,0M706.36,788.61a1.8,1.8 0 1,0 3.6,0a1.8,1.8 0 1,0 -3.6,0M713.83,767.28a1.8,1.8 0 1,0 3.6,0a1.8,1.8 0 1,0 -3.6,0M721.30,721.56a1.8,1.8 0 1,0 3.6,0a1.8,1.8 0 1,0 -3.6,0M728.77,764.23a1.8,1.8 0 1,0 3.6,0a1.8,1.8 0 1,0 -3.6,0M736.25,666.69a1.8,1.8 0 1,0 3.6,0a1.8,1.8 0 1,0 -3.6,0M743.72,806.90a1.8,1.8 0 1,0 3.6,0a1.8,1.8 0 1,0 -3.6,0M751.19,806.90a1.8,1.8 0 1,0 3.6,0a1.8,1.8 0 1,0 -3.6,0M758.67,748.99a1.8,1.8 0 1,0 3.6,0a1.8,1.8 0 1,0 -3.6,0M766.14,761.18a1.8,1.8 0 1,0 3.6,0a1.8,1.8 0 1,0 -3.6,0M773.61,782.52a1.8,1.8 0 1,0 3.6,0a1.8,1.8 0 1,0 -3.6,0M781.08,782.52a1.8,1.8 0 1,0 3.6,0a1.8,1.8 0 1,0 -3.6,0M788.56,697.17a1.8,1.8 0 1,0 3.6,0a1.8,1.8 0 1,0 -3.6,0M796.03,788.61a1.8,1.8 0 1,0 3.6,0a1.8,1.8 0 1,0 -3.6,0M803.50,806.90a1.8,1.8 0 1,0 3.6,0a1.8,1.8 0 1,0 -3.6,0M810.98,785.56a1.8,1.8 0 1,0 3.6,0a1.8,1.8 0 1,0 -3.6,0M818.45,788.61a1.8,1.8 0 1,0 3.6,0a1.8,1.8 0 1,0 -3.6,0M825.92,770.32a1.8,1.8 0 1,0 3.6,0a1.8,1.8 0 1,0 -3.6,0M833.40,806.90a1.8,1.8 0 1,0 3.6,0a1.8,1.8 0 1,0 -3.6,0M840.87,806.90a1.8,1.8 0 1,0 3.6,0a1.8,1.8 0 1,0 -3.6,0M848.34,806.90a1.8,1.8 0 1,0 3.6,0a1.8,1.8 0 1,0 -3.6,0M855.81,806.90a1.8,1.8 0 1,0 3.6,0a1.8,1.8 0 1,0 -3.6,0M863.29,806.90a1.8,1.8 0 1,0 3.6,0a1.8,1.8 0 1,0 -3.6,0M870.76,806.90a1.8,1.8 0 1,0 3.6,0a1.8,1.8 0 1,0 -3.6,0M878.23,736.80a1.8,1.8 0 1,0 3.6,0a1.8,1.8 0 1,0 -3.6,0M885.71,785.56a1.8,1.8 0 1,0 3.6,0a1.8,1.8 0 1,0 -3.6,0M893.18,782.52a1.8,1.8 0 1,0 3.6,0a1.8,1.8 0 1,0 -3.6,0M900.65,806.90a1.8,1.8 0 1,0 3.6,0a1.8,1.8 0 1,0 -3.6,0M908.13,806.90a1.8,1.8 0 1,0 3.6,0a1.8,1.8 0 1,0 -3.6,0M915.60,806.90a1.8,1.8 0 1,0 3.6,0a1.8,1.8 0 1,0 -3.6,0M923.07,758.13a1.8,1.8 0 1,0 3.6,0a1.8,1.8 0 1,0 -3.6,0M930.54,742.89a1.8,1.8 0 1,0 3.6,0a1.8,1.8 0 1,0 -3.6,0M938.02,806.90a1.8,1.8 0 1,0 3.6,0a1.8,1.8 0 1,0 -3.6,0M945.49,806.90a1.8,1.8 0 1,0 3.6,0a1.8,1.8 0 1,0 -3.6,0M952.96,806.90a1.8,1.8 0 1,0 3.6,0a1.8,1.8 0 1,0 -3.6,0M960.44,806.90a1.8,1.8 0 1,0 3.6,0a1.8,1.8 0 1,0 -3.6,0M967.91,752.04a1.8,1.8 0 1,0 3.6,0a1.8,1.8 0 1,0 -3.6,0M975.38,806.90a1.8,1.8 0 1,0 3.6,0a1.8,1.8 0 1,0 -3.6,0M982.86,806.90a1.8,1.8 0 1,0 3.6,0a1.8,1.8 0 1,0 -3.6,0M990.33,806.90a1.8,1.8 0 1,0 3.6,0a1.8,1.8 0 1,0 -3.6,0" fill="#78f040"/>
<path d="M78.62,703.27a1.8,1.8 0 1,0 3.6,0a1.8,1.8 0 1,0 -3.6,0M86.10,584.40a1.8,1.8 0 1,0 3.6,0a1.8,1.8 0 1,0 -3.6,0M93.57,648.40a1.8,1.8 0 1,0 3.6,0a1.8,1.8 0 1,0 -3.6,0M101.04,721.56a1.8,1.8 0 1,0 3.6,0a1.8,1.8 0 1,0 -3.6,0M108.52,590.49a1.8,1.8 0 1,0 3.6,0a1.8,1.8 0 1,0 -3.6,0M115.99,620.97a1.8,1.8 0 1,0 3.6,0a1.8,1.8 0 1,0 -3.6,0M123.46,593.54a1.8,1.8 0 1,0 3.6,0a1.8,1.8 0 1,0 -3.6,0M130.93,715.46a1.8,1.8 0 1,0 3.6,0a1.8,1.8 0 1,0 -3.6,0M138.41,654.50a1.8,1.8 0 1,0 3.6,0a1.8,1.8 0 1,0 -3.6,0M145.88,596.59a1.8,1.8 0 1,0 3.6,0a1.8,1.8 0 1,0 -3.6,0M153.35,703.27a1.8,1.8 0 1,0 3.6,0a1.8,1.8 0 1,0 -3.6,0M160.83,648.40a1.8,1.8 0 1,0 3.6,0a1.8,1.8 0 1,0 -3.6,0M168.30,660.60a1.8,1.8 0 1,0 3.6,0a1.8,1.8 0 1,0 -3.6,0M175.77,636.21a1.8,1.8 0 1,0 3.6,0a1.8,1.8 0 1,0 -3.6,0M183.24,660.60a1.8,1.8 0 1,0 3.6,0a1.8,1.8 0 1,0 -3.6,0M190.72,675.84a1.8,1.8 0 1,0 3.6,0a1.8,1.8 0 1,0 -3.6,0M198.19,666.69a1.8,1.8 0 1,0 3.6,0a1.8,1.8 0 1,0 -3.6,0M205.66,654.50a1.8,1.8 0 1,0 3.6,0a1.8,1.8 0 1,0 -3.6,0M213.14,630.12a1.8,1.8 0 1,0 3.6,0a1.8,1.8 0 1,0 -3.6,0M220.61,748.99a1.8,1.8 0 1,0 3.6,0a1.8,1.8 0 1,0 -3.6,0M228.08,578.30a1.8,1.8 0 1,0 3.6,0a1.8,1.8 0 1,0 -3.6,0M235.56,624.02a1.8,1.8 0 1,0 3.6,0a1.8,1.8 0 1,0 -3.6,0M243.03,755.08a1.8,1.8 0 1,0 3.6,0a1.8,1.8 0 1,0 -3.6,0M250.50,620.97a1.8,1.8 0 1,0 3.6,0a1.8,1.8 0 1,0 -3.6,0M257.97,672.79a1.8,1.8 0 1,0 3.6,0a1.8,1.8 0 1,0 -3.6,0M265.45,657.55a1.8,1.8 0 1,0 3.6,0a1.8,1.8 0 1,0 -3.6,0M272.92,675.84a1.8,1.8 0 1,0 3.6,0a1.8,1.8 0 1,0 -3.6,0M280.39,782.52a1.8,1.8 0 1,0 3.6,0a1.8,1.8 0 1,0 -3.6,0M287.87,712.41a1.8,1.8 0 1,0 3.6,0a1.8,1.8 0 1,0 -3.6,0M295.34,666.69a1.8,1.8 0 1,0 3.6,0a1.8,1.8 0 1,0 -3.6,0M302.81,678.88a1.8,1.8 0 1,0 3.6,0a1.8,1.8 0 1,0 -3.6,0M310.29,806.90a1.8,1.8 0 1,0 3.6,0a1.8,1.8 0 1,0 -3.6,0M317.76,678.88a1.8,1.8 0 1,0 3.6,0a1.8,1.8 0 1,0 -3.6,0M325.23,645.36a1.8,1.8 0 1,0 3.6,0a1.8,1.8 0 1,0 -3.6,0M332.70,733.75a1.8,1.8 0 1,0 3.6,0a1.8,1.8 0 1,0 -3.6,0M340.18,764.23a1.8,1.8 0 1,0 3.6,0a1.8,1.8 0 1,0 -3.6,0M347.65,660.60a1.8,1.8 0 1,0 3.6,0a1.8,1.8 0 1,0 -3.6,0M355.12,785.56a1.8,1.8 0 1,0 3.6,0a1.8,1.8 0 1,0 -3.6,0M362.60,806.90a1.8,1.8 0 1,0 3.6,0a1.8,1.8 0 1,0 -3.6,0M370.07,654.50a1.8,1.8 0 1,0 3.6,0a1.8,1.8 0 1,0 -3.6,0M377.54,681.93a1.8,1.8 0 1,0 3.6,0a1.8,1.8 0 1,0 -3.6,0M385.02,669.74a1.8,1.8 0 1,0 3.6,0a1.8,1.8 0 1,0 -3.6,0M392.49,706.32a1.8,1.8 0 1,0 3.6,0a1.8,1.8 0 1,0 -3.6,0M399.96,806.90a1.8,1.8 0 1,0 3.6,0a1.8,1.8 0 1,0 -3.6,0M407.43,727.65a1.8,1.8 0 1,0 3.6,0a1.8,1.8 0 1,0 -3.6,0M414.91,660.60a1.8,1.8 0 1,0 3.6,0a1.8,1.8 0 1,0 -3.6,0M422.38,733.75a1.8,1.8 0 1,0 3.6,0a1.8,1.8 0 1,0 -3.6,0M429.85,785.56a1.8,1.8 0 1,0 3.6,0a1.8,1.8 0 1,0 -3.6,0M437.33,788.61a1.8,1.8 0 1,0 3.6,0a1.8,1.8 0 1,0 -3.6,0M444.80,806.90a1.8,1.8 0 1,0 3.6,0a1.8,1.8 0 1,0 -3.6,0M452.27,672.79a1.8,1.8 0 1,0 3.6,0a1.8,1.8 0 1,0 -3.6,0M459.75,770.32a1.8,1.8 0 1,0 3.6,0a1.8,1.8 0 1,0 -3.6,0M467.22,779.47a1.8,1.8 0 1,0 3.6,0a1.8,1.8 0 1,0 -3.6,0M474.69,730.70a1.8,1.8 0 1,0 3.6,0a1.8,1.8 0 1,0 -3.6,0M482.16,752.04a1.8,1.8 0 1,0 3.6,0a1.8,1.8 0 1,0 -3.6,0M489.64,806.90a1.8,1.8 0 1,0 3.6,0a1.8,1.8 0 1,0 -3.6,0M497.11,694.12a1.8,1.8 0 1,0 3.6,0a1.8,1.8 0 1,0 -3.6,0M504.58,712.41a1.8,1.8 0 1,0 3.6,0a1.8,1.8 0 1,0 -3.6,0M512.06,785.56a1.8,1.8 0 1,0 3.6,0a1.8,1.8 0 1,0 -3.6,0M519.53,767.28a1.8,1.8 0 1,0 3.6,0a1.8,1.8 0 1,0 -3.6,0M527.00,779.47a1.8,1.8 0 1,0 3.6,0a1.8,1.8 0 1,0 -3.6,0M534.48,727.65a1.8,1.8 0 1,0 3.6,0a1.8,1.8 0 1,0 -3.6,0M541.95,745.94a1.8,1.8 0 1,0 3.6,0a1.8,1.8 0 1,0 -3.6,0M549.42,742.89a1.8,1.8 0 1,0 3.6,0a1.8,1.8 0 1,0 -3.6,0M556.89,755.08a1.8,1.8 0 1,0 3.6,0a1.8,1.8 0 1,0 -3.6,0M564.37,730.70a1.8,1.8 0 1,0 3.6,0a1.8,1.8 0 1,0 -3.6,0M571.84,691.08a1.8,1.8 0 1,0 3.6,0a1.8,1.8 0 1,0 -3.6,0M579.31,806.90a1.8,1.8 0 1,0 3.6,0a1.8,1.8 0 1,0 -3.6,0M586.79,764.23a1.8,1.8 0 1,0 3.6,0a1.8,1.8 0 1,0 -3.6,0M594.26,669.74a1.8,1.8 0 1,0 3.6,0a1.8,1.8 0 1,0 -3.6,0M601.73,767.28a1.8,1.8 0 1,0 3.6,0a1.8,1.8 0 1,0 -3.6,0M609.21,730.70a1.8,1.8 0 1,0 3.6,0a1.8,1.8 0 1,0 -3.6,0M616.68,700.22a1.8,1.8 0 1,0 3.6,0a1.8,1.8 0 1,0 -3.6,0M624.15,730.70a1.8,1.8 0 1,0 3.6,0a1.8,1.8 0 1,0 -3.6,0M631.62,758.13a1.8,1.8 0 1,0 3.6,0a1.8,1.8 0 1,0 -3.6,0M639.10,785.56a1.8,1.8 0 1,0 3.6,0a1.8,1.8 0 1,0 -3.6,0M646.57,730.70a1.8,1.8 0 1,0 3.6,0a1.8,1.8 0 1,0 -3.6,0M654.04,742.89a1.8,1.8 0 1,0 3.6,0a1.8,1.8 0 1,0 -3.6,0M661.52,806.90a1.8,1.8 0 1,0 3.6,0a1.8,1.8 0 1,0 -3.6,0M668.99,727.65a1.8,1.8 0 1,0 3.6,0a1.8,1.8 0 1,0 -3.6,0M676.46,806.90a1.8,1.8 0 1,0 3.6,0a1.8,1.8 0 1,0 -3.6,0M683.94,773.37a1.8,1.8 0 1,0 3.6,0a1.8,1.8 0 1,0 -3.6,0M691.41,767.28a1.8,1.8 0 1,0 3.6,0a1.8,1.8 0 1,0 -3.6,0M698.88,806.90a1.8,1.8 0 1,0 3.6,0a1.8,1.8 0 1,0 -3.6,0M706.36,806.90a1.8,1.8 0 1,0 3.6,0a1.8,1.8 0 1,0 -3.6,0M713.83,788.61a1.8,1.8 0 1,0 3.6,0a1.8,1.8 0 1,0 -3.6,0M721.30,730.70a1.8,1.8 0 1,0 3.6,0a1.8,1.8 0 1,0 -3.6,0M728.77,785.56a1.8,1.8 0 1,0 3.6,0a1.8,1.8 0 1,0 -3.6,0M736.25,691.08a1.8,1.8 0 1,0 3.6,0a1.8,1.8 0 1,0 -3.6,0M743.72,806.90a1.8,1.8 0 1,0 3.6,0a1.8,1.8 0 1,0 -3.6,0M751.19,806.90a1.8,1.8 0 1,0 3.6,0a1.8,1.8 0 1,0 -3.6,0M758.67,806.90a1.8,1.8 0 1,0 3.6,0a1.8,1.8 0 1,0 -3.6,0M766.14,779.47a1.8,1.8 0 1,0 3.6,0a1.8,1.8 0 1,0 -3.6,0M773.61,806.90a1.8,1.8 0 1,0 3.6,0a1.8,1.8 0 1,0 -3.6,0M781.08,806.90a1.8,1.8 0 1,0 3.6,0a1.8,1.8 0 1,0 -3.6,0M788.56,788.61a1.8,1.8 0 1,0 3.6,0a1.8,1.8 0 1,0 -3.6,0M796.03,785.56a1.8,1.8 0 1,0 3.6,0a1.8,1.8 0 1,0 -3.6,0M803.50,806.90a1.8,1.8 0 1,0 3.6,0a1.8,1.8 0 1,0 -3.6,0M810.98,782.52a1.8,1.8 0 1,0 3.6,0a1.8,1.8 0 1,0 -3.6,0M818.45,806.90a1.8,1.8 0 1,0 3.6,0a1.8,1.8 0 1,0 -3.6,0M825.92,770.32a1.8,1.8 0 1,0 3.6,0a1.8,1.8 0 1,0 -3.6,0M833.40,806.90a1.8,1.8 0 1,0 3.6,0a1.8,1.8 0 1,0 -3.6,0M840.87,776.42a1.8,1.8 0 1,0 3.6,0a1.8,1.8 0 1,0 -3.6,0M848.34,788.61a1.8,1.8 0 1,0 3.6,0a1.8,1.8 0 1,0 -3.6,0M855.81,806.90a1.8,1.8 0 1,0 3.6,0a1.8,1.8 0 1,0 -3.6,0M863.29,806.90a1.8,1.8 0 1,0 3.6,0a1.8,1.8 0 1,0 -3.6,0M870.76,806.90a1.8,1.8 0 1,0 3.6,0a1.8,1.8 0 1,0 -3.6,0M878.23,745.94a1.8,1.8 0 1,0 3.6,0a1.8,1.8 0 1,0 -3.6,0M885.71,782.52a1.8,1.8 0 1,0 3.6,0a1.8,1.8 0 1,0 -3.6,0M893.18,806.90a1.8,1.8 0 1,0 3.6,0a1.8,1.8 0 1,0 -3.6,0M900.65,806.90a1.8,1.8 0 1,0 3.6,0a1.8,1.8 0 1,0 -3.6,0M908.13,806.90a1.8,1.8 0 1,0 3.6,0a1.8,1.8 0 1,0 -3.6,0M915.60,806.90a1.8,1.8 0 1,0 3.6,0a1.8,1.8 0 1,0 -3.6,0M923.07,782.52a1.8,1.8 0 1,0 3.6,0a1.8,1.8 0 1,0 -3.6,0M930.54,806.90a1.8,1.8 0 1,0 3.6,0a1.8,1.8 0 1,0 -3.6,0M938.02,806.90a1.8,1.8 0 1,0 3.6,0a1.8,1.8 0 1,0 -3.6,0M945.49,806.90a1.8,1.8 0 1,0 3.6,0a1.8,1.8 0 1,0 -3.6,0M952.96,806.90a1.8,1.8 0 1,0 3.6,0a1.8,1.8 0 1,0 -3.6,0M960.44,806.90a1.8,1.8 0 1,0 3.6,0a1.8,1.8 0 1,0 -3.6,0M967.91,745.94a1.8,1.8 0 1,0 3.6,0a1.8,1.8 0 1,0 -3.6,0M975.38,806.90a1.8,1.8 0 1,0 3.6,0a1.8,1.8 0 1,0 -3.6,0M982.86,806.90a1.8,1.8 0 1,0 3.6,0a1.8,1.8 0 1,0 -3.6,0M990.33,806.90a1.8,1.8 0 1,0 3.6,0a1.8,1.8 0 1,0 -3.6,0" fill="#1a30f5"/>
<path d="M78.62,654.50a1.8,1.8 0 1,0 3.6,0a1.8,1.8 0 1,0 -3.6,0M86.10,553.92a1.8,1.8 0 1,0 3.6,0a1.8,1.8 0 1,0 -3.6,0M93.57,642.31a1.8,1.8 0 1,0 3.6,0a1.8,1.8 0 1,0 -3.6,0M101.04,700.22a1.8,1.8 0 1,0 3.6,0a1.8,1.8 0 1,0 -3.6,0M108.52,599.64a1.8,1.8 0 1,0 3.6,0a1.8,1.8 0 1,0 -3.6,0M115.99,639.26a1.8,1.8 0 1,0 3.6,0a1.8,1.8 0 1,0 -3.6,0M123.46,590.49a1.8,1.8 0 1,0 3.6,0a1.8,1.8 0 1,0 -3.6,0M130.93,721.56a1.8,1.8 0 1,0 3.6,0a1.8,1.8 0 1,0 -3.6,0M138.41,617.92a1.8,1.8 0 1,0 3.6,0a1.8,1.8 0 1,0 -3.6,0M145.88,596.59a1.8,1.8 0 1,0 3.6,0a1.8,1.8 0 1,0 -3.6,0M153.35,700.22a1.8,1.8 0 1,0 3.6,0a1.8,1.8 0 1,0 -3.6,0M160.83,639.26a1.8,1.8 0 1,0 3.6,0a1.8,1.8 0 1,0 -3.6,0M168.30,669.74a1.8,1.8 0 1,0 3.6,0a1.8,1.8 0 1,0 -3.6,0M175.77,648.40a1.8,1.8 0 1,0 3.6,0a1.8,1.8 0 1,0 -3.6,0M183.24,672.79a1.8,1.8 0 1,0 3.6,0a1.8,1.8 0 1,0 -3.6,0M190.72,678.88a1.8,1.8 0 1,0 3.6,0a1.8,1.8 0 1,0 -3.6,0M198.19,669.74a1.8,1.8 0 1,0 3.6,0a1.8,1.8 0 1,0 -3.6,0M205.66,660.60a1.8,1.8 0 1,0 3.6,0a1.8,1.8 0 1,0 -3.6,0M213.14,624.02a1.8,1.8 0 1,0 3.6,0a1.8,1.8 0 1,0 -3.6,0M220.61,736.80a1.8,1.8 0 1,0 3.6,0a1.8,1.8 0 1,0 -3.6,0M228.08,556.96a1.8,1.8 0 1,0 3.6,0a1.8,1.8 0 1,0 -3.6,0M235.56,630.12a1.8,1.8 0 1,0 3.6,0a1.8,1.8 0 1,0 -3.6,0M243.03,806.90a1.8,1.8 0 1,0 3.6,0a1.8,1.8 0 1,0 -3.6,0M250.50,627.07a1.8,1.8 0 1,0 3.6,0a1.8,1.8 0 1,0 -3.6,0M257.97,694.12a1.8,1.8 0 1,0 3.6,0a1.8,1.8 0 1,0 -3.6,0M265.45,651.45a1.8,1.8 0 1,0 3.6,0a1.8,1.8 0 1,0 -3.6,0M272.92,654.50a1.8,1.8 0 1,0 3.6,0a1.8,1.8 0 1,0 -3.6,0M280.39,764.23a1.8,1.8 0 1,0 3.6,0a1.8,1.8 0 1,0 -3.6,0M287.87,706.32a1.8,1.8 0 1,0 3.6,0a1.8,1.8 0 1,0 -3.6,0M295.34,654.50a1.8,1.8 0 1,0 3.6,0a1.8,1.8 0 1,0 -3.6,0M302.81,688.03a1.8,1.8 0 1,0 3.6,0a1.8,1.8 0 1,0 -3.6,0M310.29,770.32a1.8,1.8 0 1,0 3.6,0a1.8,1.8 0 1,0 -3.6,0M317.76,684.98a1.8,1.8 0 1,0 3.6,0a1.8,1.8 0 1,0 -3.6,0M325.23,651.45a1.8,1.8 0 1,0 3.6,0a1.8,1.8 0 1,0 -3.6,0M332.70,718.51a1.8,1.8 0 1,0 3.6,0a1.8,1.8 0 1,0 -3.6,0M340.18,733.75a1.8,1.8 0 1,0 3.6,0a1.8,1.8 0 1,0 -3.6,0M347.65,700.22a1.8,1.8 0 1,0 3.6,0a1.8,1.8 0 1,0 -3.6,0M355.12,764.23a1.8,1.8 0 1,0 3.6,0a1.8,1.8 0 1,0 -3.6,0M362.60,779.47a1.8,1.8 0 1,0 3.6,0a1.8,1.8 0 1,0 -3.6,0M370.07,645.36a1.8,1.8 0 1,0 3.6,0a1.8,1.8 0 1,0 -3.6,0M377.54,681.93a1.8,1.8 0 1,0 3.6,0a1.8,1.8 0 1,0 -3.6,0M385.02,663.64a1.8,1.8 0 1,0 3.6,0a1.8,1.8 0 1,0 -3.6,0M392.49,697.17a1.8,1.8 0 1,0 3.6,0a1.8,1.8 0 1,0 -3.6,0M399.96,806.90a1.8,1.8 0 1,0 3.6,0a1.8,1.8 0 1,0 -3.6,0M407.43,733.75a1.8,1.8 0 1,0 3.6,0a1.8,1.8 0 1,0 -3.6,0M414.91,660.60a1.8,1.8 0 1,0 3.6,0a1.8,1.8 0 1,0 -3.6,0M422.38,752.04a1.8,1.8 0 1,0 3.6,0a1.8,1.8 0 1,0 -3.6,0M429.85,788.61a1.8,1.8 0 1,0 3.6,0a1.8,1.8 0 1,0 -3.6,0M437.33,779.47a1.8,1.8 0 1,0 3.6,0a1.8,1.8 0 1,0 -3.6,0M444.80,806.90a1.8,1.8 0 1,0 3.6,0a1.8,1.8 0 1,0 -3.6,0M452.27,694.12a1.8,1.8 0 1,0 3.6,0a1.8,1.8 0 1,0 -3.6,0M459.75,767.28a1.8,1.8 0 1,0 3.6,0a1.8,1.8 0 1,0 -3.6,0M467.22,761.18a1.8,1.8 0 1,0 3.6,0a1.8,1.8 0 1,0 -3.6,0M474.69,712.41a1.8,1.8 0 1,0 3.6,0a1.8,1.8 0 1,0 -3.6,0M482.16,755.08a1.8,1.8 0 1,0 3.6,0a1.8,1.8 0 1,0 -3.6,0M489.64,785.56a1.8,1.8 0 1,0 3.6,0a1.8,1.8 0 1,0 -3.6,0M497.11,678.88a1.8,1.8 0 1,0 3.6,0a1.8,1.8 0 1,0 -3.6,0M504.58,709.36a1.8,1.8 0 1,0 3.6,0a1.8,1.8 0 1,0 -3.6,0M512.06,764.23a1.8,1.8 0 1,0 3.6,0a1.8,1.8 0 1,0 -3.6,0M519.53,788.61a1.8,1.8 0 1,0 3.6,0a1.8,1.8 0 1,0 -3.6,0M527.00,785.56a1.8,1.8 0 1,0 3.6,0a1.8,1.8 0 1,0 -3.6,0M534.48,788.61a1.8,1.8 0 1,0 3.6,0a1.8,1.8 0 1,0 -3.6,0M541.95,773.37a1.8,1.8 0 1,0 3.6,0a1.8,1.8 0 1,0 -3.6,0M549.42,739.84a1.8,1.8 0 1,0 3.6,0a1.8,1.8 0 1,0 -3.6,0M556.89,739.84a1.8,1.8 0 1,0 3.6,0a1.8,1.8 0 1,0 -3.6,0M564.37,727.65a1.8,1.8 0 1,0 3.6,0a1.8,1.8 0 1,0 -3.6,0M571.84,691.08a1.8,1.8 0 1,0 3.6,0a1.8,1.8 0 1,0 -3.6,0M579.31,788.61a1.8,1.8 0 1,0 3.6,0a1.8,1.8 0 1,0 -3.6,0M586.79,761.18a1.8,1.8 0 1,0 3.6,0a1.8,1.8 0 1,0 -3.6,0M594.26,706.32a1.8,1.8 0 1,0 3.6,0a1.8,1.8 0 1,0 -3.6,0M601.73,745.94a1.8,1.8 0 1,0 3.6,0a1.8,1.8 0 1,0 -3.6,0M609.21,767.28a1.8,1.8 0 1,0 3.6,0a1.8,1.8 0 1,0 -3.6,0M616.68,697.17a1.8,1.8 0 1,0 3.6,0a1.8,1.8 0 1,0 -3.6,0M624.15,727.65a1.8,1.8 0 1,0 3.6,0a1.8,1.8 0 1,0 -3.6,0M631.62,752.04a1.8,1.8 0 1,0 3.6,0a1.8,1.8 0 1,0 -3.6,0M639.10,785.56a1.8,1.8 0 1,0 3.6,0a1.8,1.8 0 1,0 -3.6,0M646.57,706.32a1.8,1.8 0 1,0 3.6,0a1.8,1.8 0 1,0 -3.6,0M654.04,742.89a1.8,1.8 0 1,0 3.6,0a1.8,1.8 0 1,0 -3.6,0M661.52,806.90a1.8,1.8 0 1,0 3.6,0a1.8,1.8 0 1,0 -3.6,0M668.99,715.46a1.8,1.8 0 1,0 3.6,0a1.8,1.8 0 1,0 -3.6,0M676.46,806.90a1.8,1.8 0 1,0 3.6,0a1.8,1.8 0 1,0 -3.6,0M683.94,773.37a1.8,1.8 0 1,0 3.6,0a1.8,1.8 0 1,0 -3.6,0M691.41,752.04a1.8,1.8 0 1,0 3.6,0a1.8,1.8 0 1,0 -3.6,0M698.88,806.90a1.8,1.8 0 1,0 3.6,0a1.8,1.8 0 1,0 -3.6,0M706.36,788.61a1.8,1.8 0 1,0 3.6,0a1.8,1.8 0 1,0 -3.6,0M713.83,788.61a1.8,1.8 0 1,0 3.6,0a1.8,1.8 0 1,0 -3.6,0M721.30,727.65a1.8,1.8 0 1,0 3.6,0a1.8,1.8 0 1,0 -3.6,0M728.77,764.23a1.8,1.8 0 1,0 3.6,0a1.8,1.8 0 1,0 -3.6,0M736.25,700.22a1.8,1.8 0 1,0 3.6,0a1.8,1.8 0 1,0 -3.6,0M743.72,806.90a1.8,1.8 0 1,0 3.6,0a1.8,1.8 0 1,0 -3.6,0M751.19,806.90a1.8,1.8 0 1,0 3.6,0a1.8,1.8 0 1,0 -3.6,0M758.67,806.90a1.8,1.8 0 1,0 3.6,0a1.8,1.8 0 1,0 -3.6,0M766.14,742.89a1.8,1.8 0 1,0 3.6,0a1.8,1.8 0 1,0 -3.6,0M773.61,806.90a1.8,1.8 0 1,0 3.6,0a1.8,1.8 0 1,0 -3.6,0M781.08,806.90a1.8,1.8 0 1,0 3.6,0a1.8,1.8 0 1,0 -3.6,0M788.56,767.28a1.8,1.8 0 1,0 3.6,0a1.8,1.8 0 1,0 -3.6,0M796.03,785.56a1.8,1.8 0 1,0 3.6,0a1.8,1.8 0 1,0 -3.6,0M803.50,806.90a1.8,1.8 0 1,0 3.6,0a1.8,1.8 0 1,0 -3.6,0M810.98,776.42a1.8,1.8 0 1,0 3.6,0a1.8,1.8 0 1,0 -3.6,0M818.45,788.61a1.8,1.8 0 1,0 3.6,0a1.8,1.8 0 1,0 -3.6,0M825.92,776.42a1.8,1.8 0 1,0 3.6,0a1.8,1.8 0 1,0 -3.6,0M833.40,806.90a1.8,1.8 0 1,0 3.6,0a1.8,1.8 0 1,0 -3.6,0M840.87,806.90a1.8,1.8 0 1,0 3.6,0a1.8,1.8 0 1,0 -3.6,0M848.34,785.56a1.8,1.8 0 1,0 3.6,0a1.8,1.8 0 1,0 -3.6,0M855.81,806.90a1.8,1.8 0 1,0 3.6,0a1.8,1.8 0 1,0 -3.6,0M863.29,806.90a1.8,1.8 0 1,0 3.6,0a1.8,1.8 0 1,0 -3.6,0M870.76,806.90a1.8,1.8 0 1,0 3.6,0a1.8,1.8 0 1,0 -3.6,0M878.23,709.36a1.8,1.8 0 1,0 3.6,0a1.8,1.8 0 1,0 -3.6,0M885.71,788.61a1.8,1.8 0 1,0 3.6,0a1.8,1.8 0 1,0 -3.6,0M893.18,806.90a1.8,1.8 0 1,0 3.6,0a1.8,1.8 0 1,0 -3.6,0M900.65,806.90a1.8,1.8 0 1,0 3.6,0a1.8,1.8 0 1,0 -3.6,0M908.13,806.90a1.8,1.8 0 1,0 3.6,0a1.8,1.8 0 1,0 -3.6,0M915.60,806.90a1.8,1.8 0 1,0 3.6,0a1.8,1.8 0 1,0 -3.6,0M923.07,764.23a1.8,1.8 0 1,0 3.6,0a1.8,1.8 0 1,0 -3.6,0M930.54,806.90a1.8,1.8 0 1,0 3.6,0a1.8,1.8 0 1,0 -3.6,0M938.02,806.90a1.8,1.8 0 1,0 3.6,0a1.8,1.8 0 1,0 -3.6,0M945.49,806.90a1.8,1.8 0 1,0 3.6,0a1.8,1.8 0 1,0 -3.6,0M952.96,788.61a1.8,1.8 0 1,0 3.6,0a1.8,1.8 0 1,0 -3.6,0M960.44,767.28a1.8,1.8 0 1,0 3.6,0a1.8,1.8 0 1,0 -3.6,0M967.91,733.75a1.8,1.8 0 1,0 3.6,0a1.8,1.8 0 1,0 -3.6,0M975.38,806.90a1.8,1.8 0 1,0 3.6,0a1.8,1.8 0 1,0 -3.6,0M982.86,806.90a1.8,1.8 0 1,0 3.6,0a1.8,1.8 0 1,0 -3.6,0M990.33,806.90a1.8,1.8 0 1,0 3.6,0a1.8,1.8 0 1,0 -3.6,0" fill="#e5391b"/>
</svg>
<rect x="434.5" y="857.5" width="156" height="21" fill="#fff" stroke="#333" stroke-width="1.2"/>
<path d="M437.5,867.8H452.0" stroke="#e5391b" stroke-width="1" stroke-opacity="0.8"/>
<circle cx="444.7" cy="867.8" r="2" fill="#e5391b"/>
<text x="455.5" y="873.2" font-size="12.5" fill="#555">3</text>
<path d="M468.2,867.8H482.7" stroke="#1a30f5" stroke-width="1" stroke-opacity="0.8"/>
<circle cx="475.4" cy="867.8" r="2" fill="#1a30f5"/>
<text x="486.2" y="873.2" font-size="12.5" fill="#555">4</text>
<path d="M498.9,867.8H513.4" stroke="#78f040" stroke-width="1" stroke-opacity="0.8"/>
<circle cx="506.09999999999997" cy="867.8" r="2" fill="#78f040"/>
<text x="516.9" y="873.2" font-size="12.5" fill="#555">5</text>
<path d="M530.1,867.8H544.6" stroke="#000000" stroke-width="1" stroke-opacity="0.8"/>
<circle cx="537.3000000000001" cy="867.8" r="2" fill="#000000"/>
<text x="548.1" y="873.2" font-size="12.5" fill="#555">6</text>
<path d="M561.1,867.8H575.6" stroke="#f4c020" stroke-width="1" stroke-opacity="0.8"/>
<circle cx="568.3000000000001" cy="867.8" r="2" fill="#f4c020"/>
<text x="579.1" y="873.2" font-size="12.5" fill="#555">7</text>
</svg>
<div class="b" style="left:0px;top:0px;width:1px;height:911px;background:#3c3c3c;"></div>
<div class="b" style="left:1px;top:40px;width:2px;height:416px;background:#636363;"></div>
<div class="b" style="left:1px;top:456px;width:1px;height:455px;background:#3c3c3c;"></div>
<div class="b" style="left:1023px;top:0px;width:1px;height:911px;background:#3c3c3c;"></div>
<div class="b" style="left:0px;top:0px;width:1024px;height:1px;background:#3c3c3c;"></div>
<div class="b" style="left:0px;top:910px;width:1024px;height:1px;background:#3c3c3c;"></div>
</body></html>
